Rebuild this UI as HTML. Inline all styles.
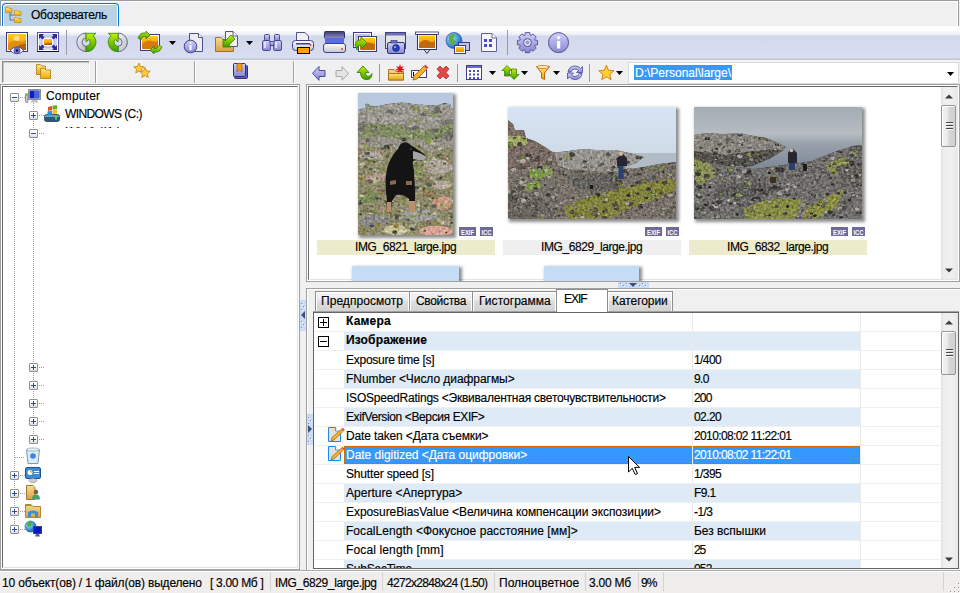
<!DOCTYPE html>
<html><head><meta charset="utf-8">
<style>
*{margin:0;padding:0;box-sizing:border-box}
html,body{width:960px;height:593px;overflow:hidden;background:#f0f0f0;font-family:"Liberation Sans",sans-serif;font-size:12px;color:#000;position:relative}
.a{position:absolute}
.t{position:absolute;white-space:nowrap;line-height:14px;font-size:12px;-webkit-text-stroke:0.15px currentColor}
svg{position:absolute;overflow:visible}
.b{font-weight:bold}
</style></head><body>
<div class="a" style="left:0px;top:0px;width:959px;height:26px;background:#f0f0f0;border-top:1px solid #9c9c9c;border-left:1px solid #9c9c9c;border-right:1px solid #9c9c9c"></div>
<div class="a" style="left:1px;top:1px;width:957px;height:1px;background:#fff;"></div>
<div class="a" style="left:1px;top:1px;width:1px;height:25px;background:#fff;"></div>
<div class="a" style="left:957px;top:1px;width:1px;height:25px;background:#fff;"></div>
<div class="a" style="left:2px;top:3px;width:117px;height:23px;border:1px solid #0a78d8;border-bottom:none;border-radius:4px 4px 0 0;background:#bad2e4;box-shadow:inset 1px 1px 0 #fff,inset -1px 0 0 #fff"></div>
<div class="t" id="m0" style="left:31px;top:8px;letter-spacing:-0.267px;">Обозреватель</div>
<div class="a" style="left:0px;top:26px;width:960px;height:34px;background:linear-gradient(#ffffff 0px,#ffffff 4px,#e9ecf6 9px,#d3d9ec 10px,#d8deef 32px,#c2c6d2 33px);"></div>
<div class="a" style="left:0px;top:60px;width:960px;height:1px;background:#f7f7f7;"></div>
<div class="a" style="left:66px;top:30px;width:1px;height:25px;background:#9a9aa8;"></div>
<div class="a" style="left:507px;top:30px;width:1px;height:25px;background:#9a9aa8;"></div>
<svg style="left:169px;top:41px" width="7" height="4" viewBox="0 0 7 4"><path d="M0,0H7L3.5,4Z" fill="#000"/></svg>
<svg style="left:246px;top:41px" width="7" height="4" viewBox="0 0 7 4"><path d="M0,0H7L3.5,4Z" fill="#000"/></svg>
<div class="a" style="left:2px;top:61px;width:88px;height:22px;background:repeating-conic-gradient(#fbfbfb 0 25%,#e6e6e6 0 50%) 0 0/2px 2px;border-top:1px solid #8a8a8a;border-left:1px solid #8a8a8a;border-right:1px solid #fff;border-bottom:1px solid #fff;box-shadow:inset 1px 1px 0 #c8c8c8"></div>
<div class="a" style="left:95px;top:61px;width:1px;height:22px;background:#a0a0a0;"></div>
<div class="a" style="left:96px;top:61px;width:1px;height:22px;background:#fff;"></div>
<div class="a" style="left:194px;top:61px;width:1px;height:22px;background:#a0a0a0;"></div>
<div class="a" style="left:195px;top:61px;width:1px;height:22px;background:#fff;"></div>
<div class="a" style="left:293px;top:61px;width:1px;height:22px;background:#a0a0a0;"></div>
<div class="a" style="left:294px;top:61px;width:1px;height:22px;background:#fff;"></div>
<div class="a" style="left:379px;top:64px;width:1px;height:18px;background:#9a9aa8;"></div>
<div class="a" style="left:457px;top:64px;width:1px;height:18px;background:#9a9aa8;"></div>
<div class="a" style="left:589px;top:64px;width:1px;height:18px;background:#9a9aa8;"></div>
<svg style="left:489px;top:71px" width="7" height="4" viewBox="0 0 7 4"><path d="M0,0H7L3.5,4Z" fill="#000"/></svg>
<svg style="left:521px;top:71px" width="7" height="4" viewBox="0 0 7 4"><path d="M0,0H7L3.5,4Z" fill="#000"/></svg>
<svg style="left:553px;top:71px" width="7" height="4" viewBox="0 0 7 4"><path d="M0,0H7L3.5,4Z" fill="#000"/></svg>
<svg style="left:616px;top:71px" width="7" height="4" viewBox="0 0 7 4"><path d="M0,0H7L3.5,4Z" fill="#000"/></svg>
<div class="a" style="left:628px;top:62px;width:331px;height:22px;background:#fff;border:1px solid #dadada"></div>
<div class="a" style="left:634px;top:65px;width:98px;height:15px;background:#3399ff;"></div>
<div class="t" id="m1" style="left:635px;top:66px;letter-spacing:-0.003px;color:#fff">D:\Personal\large\</div>
<svg style="left:947px;top:72px" width="7" height="4" viewBox="0 0 7 4"><path d="M0,0H7L3.5,4Z" fill="#000"/></svg>
<div class="a" style="left:0px;top:84px;width:300px;height:486px;background:#fff;border:1px solid #a0a0a0;border-top-color:#a0a0a0"></div>
<div class="a" style="left:2px;top:86px;width:296px;height:482px;background:#fff;border-top:1px solid #696969;border-left:1px solid #696969;border-right:1px solid #e3e3e3;border-bottom:1px solid #e3e3e3"></div>
<div class="t" id="m2" style="left:46px;top:89px;letter-spacing:0.188px;">Computer</div>
<div class="t" id="m3" style="left:65px;top:107px;letter-spacing:-0.599px;">WINDOWS (C:)</div>
<div class="a" style="left:306px;top:84px;width:654px;height:198px;background:#fff;border:1px solid #a0a0a0"></div>
<div class="a" style="left:308px;top:86px;width:650px;height:194px;background:#fff;border-top:1px solid #696969;border-left:1px solid #696969;border-right:1px solid #e3e3e3;border-bottom:1px solid #e3e3e3"></div>
<div class="a" style="left:306px;top:288px;width:654px;height:282px;background:#f0f0f0;border-top:1px solid #a0a0a0;border-left:1px solid #a0a0a0"></div>
<div class="a" style="left:313px;top:312px;width:646px;height:257px;background:#fff;border:1px solid #646464"></div>
<div class="a" style="left:306px;top:569px;width:654px;height:1px;background:#fafafa;"></div>
<div class="a" style="left:0px;top:570px;width:960px;height:1px;background:#a8a8a8;"></div>
<div class="a" style="left:0px;top:571px;width:960px;height:22px;background:#f0eded;border-top:1px solid #fff"></div>
<div class="t" id="m4" style="left:2px;top:576px;letter-spacing:-0.171px;">10 объект(ов) / 1 файл(ов) выделено</div>
<div class="t" id="m5" style="left:210px;top:576px;letter-spacing:-0.316px;">[ 3.00 Мб ]</div>
<div class="t" id="m6" style="left:275px;top:576px;letter-spacing:-0.397px;">IMG_6829_large.jpg</div>
<div class="t" id="m7" style="left:387px;top:576px;letter-spacing:-0.690px;">4272x2848x24 (1.50)</div>
<div class="t" id="m8" style="left:499px;top:576px;letter-spacing:-0.000px;">Полноцветное</div>
<div class="t" id="m9" style="left:589px;top:576px;letter-spacing:-0.227px;">3.00 Мб</div>
<div class="t" id="m10" style="left:641px;top:576px;letter-spacing:-1.044px;">9%</div>
<div class="a" style="left:14px;top:103px;width:1px;height:427px;background:repeating-linear-gradient(#a0a0a0 0 1px,transparent 1px 2px);"></div>
<div class="a" style="left:33px;top:103px;width:1px;height:337px;background:repeating-linear-gradient(#a0a0a0 0 1px,transparent 1px 2px);"></div>
<div class="a" style="left:10px;top:93px;width:9px;height:9px;border:1px solid #919191;border-radius:1px;background:linear-gradient(#fff,#fff 40%,#dcdcdc)"></div>
<div class="a" style="left:12px;top:97px;width:5px;height:1px;background:#2a4a98;"></div>
<div class="a" style="left:20px;top:97px;width:5px;height:1px;background:repeating-linear-gradient(90deg,#a0a0a0 0 1px,transparent 1px 2px);"></div>
<div class="a" style="left:29px;top:111px;width:9px;height:9px;border:1px solid #919191;border-radius:1px;background:linear-gradient(#fff,#fff 40%,#dcdcdc)"></div>
<div class="a" style="left:31px;top:115px;width:5px;height:1px;background:#2a4a98;"></div>
<div class="a" style="left:33px;top:113px;width:1px;height:5px;background:#2a4a98;"></div>
<div class="a" style="left:39px;top:115px;width:5px;height:1px;background:repeating-linear-gradient(90deg,#a0a0a0 0 1px,transparent 1px 2px);"></div>
<div class="a" style="left:29px;top:129px;width:9px;height:9px;border:1px solid #919191;border-radius:1px;background:linear-gradient(#fff,#fff 40%,#dcdcdc)"></div>
<div class="a" style="left:31px;top:133px;width:5px;height:1px;background:#2a4a98;"></div>
<div class="a" style="left:39px;top:133px;width:5px;height:1px;background:repeating-linear-gradient(90deg,#a0a0a0 0 1px,transparent 1px 2px);"></div>
<div class="a" style="left:29px;top:363px;width:9px;height:9px;border:1px solid #919191;border-radius:1px;background:linear-gradient(#fff,#fff 40%,#dcdcdc)"></div>
<div class="a" style="left:31px;top:367px;width:5px;height:1px;background:#2a4a98;"></div>
<div class="a" style="left:33px;top:365px;width:1px;height:5px;background:#2a4a98;"></div>
<div class="a" style="left:39px;top:367px;width:5px;height:1px;background:repeating-linear-gradient(90deg,#a0a0a0 0 1px,transparent 1px 2px);"></div>
<div class="a" style="left:29px;top:381px;width:9px;height:9px;border:1px solid #919191;border-radius:1px;background:linear-gradient(#fff,#fff 40%,#dcdcdc)"></div>
<div class="a" style="left:31px;top:385px;width:5px;height:1px;background:#2a4a98;"></div>
<div class="a" style="left:33px;top:383px;width:1px;height:5px;background:#2a4a98;"></div>
<div class="a" style="left:39px;top:385px;width:5px;height:1px;background:repeating-linear-gradient(90deg,#a0a0a0 0 1px,transparent 1px 2px);"></div>
<div class="a" style="left:29px;top:399px;width:9px;height:9px;border:1px solid #919191;border-radius:1px;background:linear-gradient(#fff,#fff 40%,#dcdcdc)"></div>
<div class="a" style="left:31px;top:403px;width:5px;height:1px;background:#2a4a98;"></div>
<div class="a" style="left:33px;top:401px;width:1px;height:5px;background:#2a4a98;"></div>
<div class="a" style="left:39px;top:403px;width:5px;height:1px;background:repeating-linear-gradient(90deg,#a0a0a0 0 1px,transparent 1px 2px);"></div>
<div class="a" style="left:29px;top:417px;width:9px;height:9px;border:1px solid #919191;border-radius:1px;background:linear-gradient(#fff,#fff 40%,#dcdcdc)"></div>
<div class="a" style="left:31px;top:421px;width:5px;height:1px;background:#2a4a98;"></div>
<div class="a" style="left:33px;top:419px;width:1px;height:5px;background:#2a4a98;"></div>
<div class="a" style="left:39px;top:421px;width:5px;height:1px;background:repeating-linear-gradient(90deg,#a0a0a0 0 1px,transparent 1px 2px);"></div>
<div class="a" style="left:29px;top:435px;width:9px;height:9px;border:1px solid #919191;border-radius:1px;background:linear-gradient(#fff,#fff 40%,#dcdcdc)"></div>
<div class="a" style="left:31px;top:439px;width:5px;height:1px;background:#2a4a98;"></div>
<div class="a" style="left:33px;top:437px;width:1px;height:5px;background:#2a4a98;"></div>
<div class="a" style="left:39px;top:439px;width:5px;height:1px;background:repeating-linear-gradient(90deg,#a0a0a0 0 1px,transparent 1px 2px);"></div>
<div class="a" style="left:15px;top:457px;width:10px;height:1px;background:repeating-linear-gradient(90deg,#a0a0a0 0 1px,transparent 1px 2px);"></div>
<div class="a" style="left:10px;top:471px;width:9px;height:9px;border:1px solid #919191;border-radius:1px;background:linear-gradient(#fff,#fff 40%,#dcdcdc)"></div>
<div class="a" style="left:12px;top:475px;width:5px;height:1px;background:#2a4a98;"></div>
<div class="a" style="left:14px;top:473px;width:1px;height:5px;background:#2a4a98;"></div>
<div class="a" style="left:20px;top:475px;width:5px;height:1px;background:repeating-linear-gradient(90deg,#a0a0a0 0 1px,transparent 1px 2px);"></div>
<div class="a" style="left:10px;top:489px;width:9px;height:9px;border:1px solid #919191;border-radius:1px;background:linear-gradient(#fff,#fff 40%,#dcdcdc)"></div>
<div class="a" style="left:12px;top:493px;width:5px;height:1px;background:#2a4a98;"></div>
<div class="a" style="left:14px;top:491px;width:1px;height:5px;background:#2a4a98;"></div>
<div class="a" style="left:20px;top:493px;width:5px;height:1px;background:repeating-linear-gradient(90deg,#a0a0a0 0 1px,transparent 1px 2px);"></div>
<div class="a" style="left:10px;top:507px;width:9px;height:9px;border:1px solid #919191;border-radius:1px;background:linear-gradient(#fff,#fff 40%,#dcdcdc)"></div>
<div class="a" style="left:12px;top:511px;width:5px;height:1px;background:#2a4a98;"></div>
<div class="a" style="left:14px;top:509px;width:1px;height:5px;background:#2a4a98;"></div>
<div class="a" style="left:20px;top:511px;width:5px;height:1px;background:repeating-linear-gradient(90deg,#a0a0a0 0 1px,transparent 1px 2px);"></div>
<div class="a" style="left:10px;top:525px;width:9px;height:9px;border:1px solid #919191;border-radius:1px;background:linear-gradient(#fff,#fff 40%,#dcdcdc)"></div>
<div class="a" style="left:12px;top:529px;width:5px;height:1px;background:#2a4a98;"></div>
<div class="a" style="left:14px;top:527px;width:1px;height:5px;background:#2a4a98;"></div>
<div class="a" style="left:20px;top:529px;width:5px;height:1px;background:repeating-linear-gradient(90deg,#a0a0a0 0 1px,transparent 1px 2px);"></div>
<div class="a" style="left:65px;top:127px;width:80px;height:1px;overflow:hidden"><div class="t" style="left:0;top:-3px;letter-spacing:0.3px">DATA (D:)</div></div>
<div class="a" style="left:314px;top:313px;width:627px;height:255px;overflow:hidden">
<div class="a" style="left:0px;top:18px;width:627px;height:1px;background:#f0f0f0;"></div>
<div class="a" style="left:4px;top:4px;width:11px;height:11px;background:#fff;border:1px solid #000"></div>
<div class="a" style="left:6px;top:9px;width:7px;height:1px;background:#000;"></div>
<div class="a" style="left:9px;top:6px;width:1px;height:7px;background:#000;"></div>
<div class="t b" id="m11" style="left:32px;top:1px;letter-spacing:0.179px;">Камера</div>
<div class="a" style="left:30px;top:19px;width:516px;height:18px;background:#deebf6;"></div>
<div class="a" style="left:0px;top:37px;width:627px;height:1px;background:#f0f0f0;"></div>
<div class="a" style="left:4px;top:23px;width:11px;height:11px;background:#fff;border:1px solid #000"></div>
<div class="a" style="left:6px;top:28px;width:7px;height:1px;background:#000;"></div>
<div class="t b" id="m12" style="left:32px;top:20px;letter-spacing:0.164px;">Изображение</div>
<div class="a" style="left:0px;top:56px;width:627px;height:1px;background:#f0f0f0;"></div>
<div class="t" id="m13" style="left:32px;top:40px;letter-spacing:-0.256px;">Exposure time [s]</div>
<div class="t" id="m14" style="left:380px;top:40px;letter-spacing:-0.601px;">1/400</div>
<div class="a" style="left:30px;top:57px;width:516px;height:18px;background:#deebf6;"></div>
<div class="a" style="left:0px;top:75px;width:627px;height:1px;background:#f0f0f0;"></div>
<div class="t" id="m15" style="left:32px;top:59px;letter-spacing:-0.057px;">FNumber &lt;Число диафрагмы&gt;</div>
<div class="t" id="m16" style="left:380px;top:59px;letter-spacing:-0.667px;">9.0</div>
<div class="a" style="left:0px;top:94px;width:627px;height:1px;background:#f0f0f0;"></div>
<div class="t" id="m17" style="left:32px;top:78px;letter-spacing:-0.230px;">ISOSpeedRatings &lt;Эквивалентная светочувствительности&gt;</div>
<div class="t" id="m18" style="left:380px;top:78px;letter-spacing:-0.801px;">200</div>
<div class="a" style="left:30px;top:95px;width:516px;height:18px;background:#deebf6;"></div>
<div class="a" style="left:0px;top:113px;width:627px;height:1px;background:#f0f0f0;"></div>
<div class="t" id="m19" style="left:32px;top:97px;letter-spacing:-0.381px;">ExifVersion &lt;Версия EXIF&gt;</div>
<div class="t" id="m20" style="left:380px;top:97px;letter-spacing:-0.601px;">02.20</div>
<div class="a" style="left:0px;top:132px;width:627px;height:1px;background:#f0f0f0;"></div>
<div class="t" id="m21" style="left:32px;top:116px;letter-spacing:-0.138px;">Date taken &lt;Дата съемки&gt;</div>
<div class="t" id="m22" style="left:380px;top:116px;letter-spacing:-0.623px;">2010:08:02 11:22:01</div>
<div class="a" style="left:30px;top:133px;width:516px;height:18px;background:#3399ff;"></div>
<div class="a" style="left:30px;top:133px;width:516px;height:1px;background:repeating-linear-gradient(90deg,#cc6600 0 1px,transparent 1px 2px);"></div>
<div class="a" style="left:30px;top:150px;width:516px;height:1px;background:repeating-linear-gradient(90deg,#cc6600 0 1px,transparent 1px 2px);"></div>
<div class="a" style="left:30px;top:133px;width:1px;height:18px;background:repeating-linear-gradient(#cc6600 0 1px,transparent 1px 2px);"></div>
<div class="a" style="left:545px;top:133px;width:1px;height:18px;background:repeating-linear-gradient(#cc6600 0 1px,transparent 1px 2px);"></div>
<div class="a" style="left:0px;top:151px;width:627px;height:1px;background:#f0f0f0;"></div>
<div class="t" id="m23" style="left:32px;top:135px;letter-spacing:-0.019px;color:#fff;">Date digitized &lt;Дата оцифровки&gt;</div>
<div class="t" id="m24" style="left:380px;top:135px;letter-spacing:-0.623px;color:#fff;">2010:08:02 11:22:01</div>
<div class="a" style="left:0px;top:170px;width:627px;height:1px;background:#f0f0f0;"></div>
<div class="t" id="m25" style="left:32px;top:154px;letter-spacing:-0.171px;">Shutter speed [s]</div>
<div class="t" id="m26" style="left:380px;top:154px;letter-spacing:-0.601px;">1/395</div>
<div class="a" style="left:30px;top:171px;width:516px;height:18px;background:#deebf6;"></div>
<div class="a" style="left:0px;top:189px;width:627px;height:1px;background:#f0f0f0;"></div>
<div class="t" id="m27" style="left:32px;top:173px;letter-spacing:0.027px;">Aperture &lt;Апертура&gt;</div>
<div class="t" id="m28" style="left:380px;top:173px;letter-spacing:-0.640px;">F9.1</div>
<div class="a" style="left:0px;top:208px;width:627px;height:1px;background:#f0f0f0;"></div>
<div class="t" id="m29" style="left:32px;top:192px;letter-spacing:-0.064px;">ExposureBiasValue &lt;Величина компенсации экспозиции&gt;</div>
<div class="t" id="m30" style="left:380px;top:192px;letter-spacing:-0.552px;">-1/3</div>
<div class="a" style="left:30px;top:209px;width:516px;height:18px;background:#deebf6;"></div>
<div class="a" style="left:0px;top:227px;width:627px;height:1px;background:#f0f0f0;"></div>
<div class="t" id="m31" style="left:32px;top:211px;letter-spacing:0.042px;">FocalLength &lt;Фокусное расстояние [мм]&gt;</div>
<div class="t" id="m32" style="left:380px;top:211px;letter-spacing:-0.008px;">Без вспышки</div>
<div class="a" style="left:0px;top:246px;width:627px;height:1px;background:#f0f0f0;"></div>
<div class="t" id="m33" style="left:32px;top:230px;letter-spacing:0.133px;">Focal length [mm]</div>
<div class="t" id="m34" style="left:380px;top:230px;letter-spacing:-1.069px;">25</div>
<div class="a" style="left:30px;top:247px;width:516px;height:18px;background:#deebf6;"></div>
<div class="a" style="left:0px;top:265px;width:627px;height:1px;background:#f0f0f0;"></div>
<div class="t" id="m35" style="left:32px;top:249px;letter-spacing:-0.227px;">SubSecTime</div>
<div class="t" id="m36" style="left:380px;top:249px;letter-spacing:-0.801px;">052</div>
<div class="a" style="left:546px;top:0px;width:1px;height:255px;background:#eaeaea;"></div>
<div class="a" style="left:378px;top:0px;width:1px;height:255px;background:#eaeaea;"></div>
</div>
<div class="a" style="left:306px;top:288px;width:654px;height:1px;background:#a0a0a0;"></div>
<div class="a" style="left:307px;top:289px;width:653px;height:1px;background:#fff;"></div>
<div class="a" style="left:306px;top:288px;width:1px;height:282px;background:#a0a0a0;"></div>
<div class="a" style="left:307px;top:289px;width:1px;height:280px;background:#fff;"></div>
<div class="a" style="left:313px;top:311px;width:646px;height:1px;background:#a0a0a0;"></div>
<div class="a" style="left:315px;top:291px;width:95px;height:20px;border:1px solid #8e8e8e;border-bottom:none;background:linear-gradient(#f3f3f3 0,#ececec 8px,#dedede 9px,#d2d2d2 19px);box-shadow:inset 1px 1px 0 #fff,inset -1px 0 0 #fff"></div>
<div class="t" id="m37" style="left:321px;top:294px;letter-spacing:0.055px;">Предпросмотр</div>
<div class="a" style="left:409px;top:291px;width:64px;height:20px;border:1px solid #8e8e8e;border-bottom:none;background:linear-gradient(#f3f3f3 0,#ececec 8px,#dedede 9px,#d2d2d2 19px);box-shadow:inset 1px 1px 0 #fff,inset -1px 0 0 #fff"></div>
<div class="t" id="m38" style="left:416px;top:294px;letter-spacing:-0.329px;">Свойства</div>
<div class="a" style="left:472px;top:291px;width:85px;height:20px;border:1px solid #8e8e8e;border-bottom:none;background:linear-gradient(#f3f3f3 0,#ececec 8px,#dedede 9px,#d2d2d2 19px);box-shadow:inset 1px 1px 0 #fff,inset -1px 0 0 #fff"></div>
<div class="t" id="m39" style="left:479px;top:294px;letter-spacing:0.033px;">Гистограмма</div>
<div class="a" style="left:607px;top:291px;width:66px;height:20px;border:1px solid #8e8e8e;border-bottom:none;background:linear-gradient(#f3f3f3 0,#ececec 8px,#dedede 9px,#d2d2d2 19px);box-shadow:inset 1px 1px 0 #fff,inset -1px 0 0 #fff"></div>
<div class="t" id="m40" style="left:612px;top:294px;letter-spacing:-0.064px;">Категории</div>
<div class="a" style="left:556px;top:289px;width:52px;height:23px;border:1px solid #8e8e8e;border-bottom:none;background:#fff"></div>
<div class="t" id="m41" style="left:564px;top:292px;letter-spacing:-1.057px;">EXIF</div>
<div class="a" style="left:309px;top:87px;width:632px;height:194px;overflow:hidden">
<div class="a" style="left:49px;top:6px;width:95px;height:142px;box-shadow:2px 2px 3px 1px rgba(0,0,0,0.45)"></div>
<svg style="left:49px;top:6px;overflow:hidden" width="95" height="142" viewBox="0 0 95 142">
<defs><linearGradient id="dsky" x1="0" y1="0" x2="0" y2="1"><stop offset="0" stop-color="#b8c8e0"/><stop offset="1" stop-color="#c8ccd0"/></linearGradient><filter id="tx1" x="0" y="0" width="100%" height="100%" color-interpolation-filters="sRGB"><feTurbulence type="fractalNoise" baseFrequency="0.4" numOctaves="3" seed="3" result="n"/><feColorMatrix in="n" type="matrix" values="0.33 0.33 0.33 0 0  0.33 0.33 0.33 0 0  0.33 0.33 0.33 0 0  0 0 0 0 1" result="g"/><feComposite in="SourceGraphic" in2="g" operator="arithmetic" k1="0" k2="1" k3="0.75" k4="-0.375" result="c"/><feComposite in="c" in2="SourceAlpha" operator="in"/></filter></defs>
<rect width="95" height="142" fill="url(#dsky)"/>
<g filter="url(#tx1)">
<path d="M0,17 Q10,13 20,13 L30,11 Q45,8 55,11 Q70,13 80,12 L95,15 V142 H0Z" fill="#98968e"/>
<path d="M0,32 Q25,28 50,34 T95,30 V142 H0Z" fill="#7e8a62"/>
<path d="M0,46 H95 V142 H0Z" fill="#8c8a6a"/>
<path d="M0,44 Q20,42 40,46 T95,44 V54 H0Z" fill="#96948a"/>
<ellipse cx="12" cy="62" rx="12" ry="4" fill="#a8a49c"/>
<ellipse cx="80" cy="74" rx="15" ry="7" fill="#aea49e"/>
<ellipse cx="76" cy="55" rx="11" ry="4" fill="#a09c94"/>
<ellipse cx="18" cy="84" rx="10" ry="4" fill="#b09a90"/>
<ellipse cx="85" cy="110" rx="11" ry="7" fill="#c89a86"/>
<ellipse cx="62" cy="122" rx="18" ry="6" fill="#9c9c9a"/>
<ellipse cx="16" cy="128" rx="15" ry="6" fill="#8a8886"/>
<ellipse cx="78" cy="138" rx="17" ry="5" fill="#d8a498"/>
<ellipse cx="38" cy="137" rx="12" ry="5" fill="#c8c49c"/>
<ellipse cx="84" cy="92" rx="10" ry="4" fill="#b8a8a0"/>
<ellipse cx="10" cy="104" rx="10" ry="6" fill="#7c8a58"/>
<ellipse cx="70" cy="100" rx="8" ry="4" fill="#8a7a58"/>
<ellipse cx="43.0" cy="98.9" rx="2.8" ry="1.8" fill="#94844a"/><ellipse cx="81.2" cy="62.6" rx="2.6" ry="1.7" fill="#4a4a40"/><ellipse cx="75.3" cy="53.2" rx="1.6" ry="0.7" fill="#6e7a48"/><ellipse cx="56.6" cy="82.8" rx="1.9" ry="1.5" fill="#a8a890"/><ellipse cx="59.2" cy="125.5" rx="1.1" ry="0.5" fill="#c0bca0"/><ellipse cx="57.0" cy="120.3" rx="1.7" ry="1.1" fill="#c0bca0"/><ellipse cx="49.3" cy="106.7" rx="2.0" ry="1.5" fill="#a8aa98"/><ellipse cx="62.2" cy="83.9" rx="2.1" ry="1.8" fill="#8a9a50"/><ellipse cx="67.2" cy="74.9" rx="1.5" ry="0.8" fill="#8a9a50"/><ellipse cx="53.5" cy="54.6" rx="1.2" ry="0.7" fill="#8a9a50"/><ellipse cx="91.0" cy="127.0" rx="1.0" ry="0.5" fill="#6e7a48"/><ellipse cx="44.6" cy="140.1" rx="1.8" ry="0.8" fill="#c0bca0"/><ellipse cx="74.0" cy="70.4" rx="1.2" ry="0.7" fill="#5a5a50"/><ellipse cx="72.0" cy="55.6" rx="1.5" ry="0.7" fill="#6e7a48"/><ellipse cx="44.2" cy="91.7" rx="2.4" ry="1.2" fill="#94844a"/><ellipse cx="18.1" cy="115.7" rx="1.3" ry="0.9" fill="#8a9a50"/><ellipse cx="37.5" cy="141.0" rx="1.0" ry="0.8" fill="#4a4a40"/><ellipse cx="28.9" cy="130.7" rx="1.4" ry="0.8" fill="#4a4a40"/><ellipse cx="61.0" cy="53.8" rx="3.0" ry="1.5" fill="#7a6a5a"/><ellipse cx="0.9" cy="103.8" rx="2.7" ry="1.6" fill="#8a9a50"/><ellipse cx="8.6" cy="101.1" rx="1.5" ry="1.0" fill="#a88a80"/><ellipse cx="59.1" cy="56.5" rx="2.2" ry="1.8" fill="#a8a890"/><ellipse cx="82.3" cy="61.9" rx="1.3" ry="1.1" fill="#4a4a40"/><ellipse cx="23.7" cy="62.6" rx="2.5" ry="2.2" fill="#c0bca0"/><ellipse cx="65.3" cy="82.0" rx="2.0" ry="0.9" fill="#6e7a48"/><ellipse cx="9.9" cy="47.8" rx="2.9" ry="1.5" fill="#5a5a50"/><ellipse cx="24.4" cy="124.7" rx="2.2" ry="1.2" fill="#a8a890"/><ellipse cx="88.3" cy="139.8" rx="1.3" ry="0.8" fill="#4a4a40"/><ellipse cx="58.4" cy="71.5" rx="2.8" ry="1.4" fill="#6e7a48"/><ellipse cx="6.6" cy="84.3" rx="1.5" ry="0.6" fill="#7a6a5a"/><ellipse cx="35.0" cy="100.1" rx="1.3" ry="0.7" fill="#a8aa98"/><ellipse cx="93.1" cy="108.4" rx="2.4" ry="1.6" fill="#a8a890"/><ellipse cx="56.0" cy="134.5" rx="1.9" ry="1.1" fill="#7a6a5a"/><ellipse cx="91.5" cy="46.1" rx="2.3" ry="1.5" fill="#7a6a5a"/><ellipse cx="30.3" cy="141.9" rx="1.2" ry="0.8" fill="#6e7a48"/><ellipse cx="85.5" cy="116.2" rx="2.4" ry="1.9" fill="#a88a80"/><ellipse cx="33.4" cy="111.1" rx="2.8" ry="2.3" fill="#5a5a50"/><ellipse cx="89.7" cy="47.0" rx="2.0" ry="0.8" fill="#5a5a50"/><ellipse cx="36.0" cy="45.2" rx="1.1" ry="0.5" fill="#8a9a50"/><ellipse cx="94.4" cy="130.2" rx="2.5" ry="1.5" fill="#4a4a40"/><ellipse cx="43.5" cy="89.3" rx="2.1" ry="1.4" fill="#94844a"/><ellipse cx="2.8" cy="102.9" rx="2.0" ry="1.0" fill="#8a9a50"/><ellipse cx="47.2" cy="104.2" rx="2.8" ry="1.5" fill="#6e7a48"/><ellipse cx="35.0" cy="58.0" rx="2.2" ry="1.5" fill="#a88a80"/><ellipse cx="62.7" cy="87.3" rx="2.8" ry="1.6" fill="#7a6a5a"/><ellipse cx="18.9" cy="86.2" rx="2.6" ry="2.2" fill="#c0bca0"/><ellipse cx="36.5" cy="101.1" rx="1.6" ry="0.8" fill="#a8aa98"/><ellipse cx="33.3" cy="131.8" rx="1.1" ry="0.5" fill="#7a6a5a"/><ellipse cx="78.1" cy="55.1" rx="1.9" ry="1.7" fill="#5a5a50"/><ellipse cx="36.3" cy="95.0" rx="2.3" ry="1.8" fill="#4a4a40"/><ellipse cx="43.0" cy="51.3" rx="1.1" ry="0.9" fill="#6e7a48"/><ellipse cx="64.4" cy="71.5" rx="1.7" ry="1.2" fill="#4a4a40"/><ellipse cx="1.8" cy="57.3" rx="1.9" ry="0.8" fill="#7a6a5a"/><ellipse cx="22.6" cy="57.8" rx="1.1" ry="0.8" fill="#a8aa98"/><ellipse cx="10.4" cy="96.5" rx="2.3" ry="1.3" fill="#8a9a50"/><ellipse cx="65.0" cy="63.5" rx="2.0" ry="1.0" fill="#6e7a48"/><ellipse cx="71.7" cy="96.4" rx="1.1" ry="0.6" fill="#a88a80"/><ellipse cx="51.3" cy="136.8" rx="2.0" ry="1.8" fill="#a8a890"/><ellipse cx="37.4" cy="121.6" rx="2.8" ry="1.2" fill="#5a5a50"/><ellipse cx="12.3" cy="88.4" rx="2.3" ry="1.9" fill="#5a5a50"/><ellipse cx="52.3" cy="108.0" rx="2.0" ry="1.6" fill="#a88a80"/><ellipse cx="44.1" cy="107.8" rx="1.4" ry="1.1" fill="#8a9a50"/><ellipse cx="20.3" cy="132.2" rx="3.0" ry="2.6" fill="#94844a"/><ellipse cx="92.8" cy="135.4" rx="1.5" ry="1.2" fill="#6e7a48"/><ellipse cx="33.1" cy="52.1" rx="1.9" ry="1.3" fill="#7a6a5a"/><ellipse cx="46.3" cy="46.8" rx="2.6" ry="1.1" fill="#6e7a48"/><ellipse cx="16.4" cy="76.8" rx="2.6" ry="1.2" fill="#a8a890"/><ellipse cx="95.0" cy="132.3" rx="2.0" ry="1.5" fill="#a8aa98"/><ellipse cx="89.8" cy="92.3" rx="2.9" ry="1.3" fill="#c0bca0"/><ellipse cx="41.7" cy="98.8" rx="2.7" ry="1.8" fill="#a8a890"/><ellipse cx="49.7" cy="126.7" rx="2.1" ry="1.2" fill="#5a5a50"/><ellipse cx="90.7" cy="129.3" rx="2.2" ry="1.2" fill="#a8a890"/><ellipse cx="92.0" cy="95.4" rx="2.1" ry="1.1" fill="#94844a"/><ellipse cx="10.9" cy="44.5" rx="1.8" ry="1.2" fill="#6e7a48"/><ellipse cx="49.0" cy="83.3" rx="2.6" ry="1.8" fill="#a8aa98"/><ellipse cx="8.9" cy="60.3" rx="2.9" ry="1.8" fill="#5a5a50"/><ellipse cx="25.6" cy="90.4" rx="1.3" ry="0.8" fill="#a8aa98"/><ellipse cx="49.9" cy="54.6" rx="1.8" ry="0.8" fill="#7a6a5a"/><ellipse cx="12.3" cy="120.4" rx="1.0" ry="0.5" fill="#c0bca0"/><ellipse cx="1.1" cy="71.8" rx="2.4" ry="1.3" fill="#a8aa98"/><ellipse cx="10.0" cy="115.6" rx="1.2" ry="0.8" fill="#7a6a5a"/><ellipse cx="68.2" cy="112.7" rx="2.8" ry="1.1" fill="#5a5a50"/><ellipse cx="78.4" cy="104.3" rx="2.1" ry="1.7" fill="#94844a"/><ellipse cx="60.7" cy="95.9" rx="2.7" ry="1.9" fill="#a8a890"/><ellipse cx="22.1" cy="116.6" rx="2.6" ry="2.2" fill="#a88a80"/><ellipse cx="57.3" cy="131.3" rx="1.4" ry="1.1" fill="#c0bca0"/><ellipse cx="84.3" cy="57.1" rx="1.5" ry="1.1" fill="#7a6a5a"/><ellipse cx="36.9" cy="86.6" rx="2.9" ry="1.9" fill="#a8a890"/><ellipse cx="19.1" cy="105.5" rx="2.6" ry="1.2" fill="#4a4a40"/><ellipse cx="64.8" cy="133.3" rx="2.9" ry="1.3" fill="#94844a"/><ellipse cx="60.3" cy="77.7" rx="3.0" ry="2.4" fill="#8a9a50"/><ellipse cx="45.8" cy="46.4" rx="2.5" ry="1.8" fill="#4a4a40"/><ellipse cx="45.7" cy="62.6" rx="1.2" ry="0.6" fill="#a8a890"/><ellipse cx="94.1" cy="134.8" rx="1.2" ry="0.5" fill="#a8aa98"/><ellipse cx="7.4" cy="53.5" rx="1.8" ry="1.1" fill="#a88a80"/><ellipse cx="40.9" cy="102.9" rx="1.0" ry="0.8" fill="#c0bca0"/><ellipse cx="17.2" cy="88.5" rx="2.5" ry="1.5" fill="#c0bca0"/><ellipse cx="57.5" cy="53.3" rx="2.6" ry="1.5" fill="#8a9a50"/><ellipse cx="76.2" cy="113.1" rx="2.7" ry="1.9" fill="#5a5a50"/><ellipse cx="54.1" cy="62.7" rx="2.2" ry="1.2" fill="#7a6a5a"/><ellipse cx="26.6" cy="55.4" rx="2.5" ry="1.2" fill="#5a5a50"/><ellipse cx="12.7" cy="76.3" rx="2.1" ry="1.2" fill="#5a5a50"/><ellipse cx="72.7" cy="83.8" rx="2.4" ry="1.1" fill="#a88a80"/><ellipse cx="28.7" cy="53.9" rx="2.8" ry="2.5" fill="#4a4a40"/><ellipse cx="4.7" cy="70.8" rx="2.9" ry="1.6" fill="#c0bca0"/><ellipse cx="62.7" cy="99.8" rx="2.1" ry="1.2" fill="#a8aa98"/><ellipse cx="61.0" cy="112.7" rx="2.5" ry="2.2" fill="#6e7a48"/><ellipse cx="10.9" cy="54.6" rx="1.5" ry="0.9" fill="#94844a"/><ellipse cx="4.8" cy="63.2" rx="1.8" ry="0.8" fill="#7a6a5a"/><ellipse cx="26.2" cy="77.4" rx="2.1" ry="1.3" fill="#94844a"/><ellipse cx="54.0" cy="141.5" rx="2.3" ry="1.8" fill="#8a9a50"/><ellipse cx="52.2" cy="109.5" rx="2.9" ry="1.7" fill="#a8a890"/><ellipse cx="36.7" cy="139.1" rx="2.7" ry="1.8" fill="#4a4a40"/><ellipse cx="5.6" cy="136.6" rx="1.8" ry="1.2" fill="#4a4a40"/><ellipse cx="29.7" cy="96.0" rx="2.0" ry="1.1" fill="#7a6a5a"/><ellipse cx="63.0" cy="117.3" rx="1.1" ry="0.8" fill="#4a4a40"/><ellipse cx="4.1" cy="59.3" rx="2.5" ry="1.5" fill="#a88a80"/><ellipse cx="71.1" cy="48.9" rx="3.0" ry="2.6" fill="#8a9a50"/><ellipse cx="75.8" cy="65.9" rx="2.4" ry="1.3" fill="#c0bca0"/><ellipse cx="4.3" cy="53.7" rx="2.6" ry="2.2" fill="#a8a890"/><ellipse cx="93.0" cy="124.0" rx="2.2" ry="1.0" fill="#4a4a40"/><ellipse cx="39.6" cy="55.6" rx="2.7" ry="1.6" fill="#a8a890"/><ellipse cx="11.8" cy="87.4" rx="2.3" ry="1.5" fill="#7a6a5a"/><ellipse cx="60.8" cy="110.8" rx="1.7" ry="1.3" fill="#a8a890"/><ellipse cx="90.5" cy="116.0" rx="1.5" ry="0.7" fill="#7a6a5a"/><ellipse cx="74.5" cy="105.2" rx="1.7" ry="0.9" fill="#4a4a40"/><ellipse cx="66.4" cy="62.6" rx="1.6" ry="0.8" fill="#c0bca0"/><ellipse cx="47.7" cy="108.0" rx="1.4" ry="1.0" fill="#6e7a48"/><ellipse cx="0.9" cy="69.4" rx="1.1" ry="0.4" fill="#c0bca0"/><ellipse cx="51.5" cy="51.1" rx="1.2" ry="0.9" fill="#94844a"/><ellipse cx="22.3" cy="140.2" rx="2.0" ry="1.1" fill="#a88a80"/><ellipse cx="32.7" cy="117.0" rx="2.7" ry="1.2" fill="#8a9a50"/><ellipse cx="42.5" cy="124.6" rx="2.7" ry="2.1" fill="#a8aa98"/><ellipse cx="40.3" cy="69.3" rx="2.6" ry="1.5" fill="#4a4a40"/><ellipse cx="30.9" cy="97.8" rx="2.5" ry="2.1" fill="#5a5a50"/><ellipse cx="62.1" cy="100.9" rx="1.9" ry="1.1" fill="#94844a"/><ellipse cx="7.9" cy="99.3" rx="2.0" ry="1.5" fill="#7a6a5a"/><ellipse cx="78.2" cy="44.9" rx="1.6" ry="1.4" fill="#4a4a40"/><ellipse cx="7.8" cy="73.8" rx="2.4" ry="1.8" fill="#7a6a5a"/><ellipse cx="83.8" cy="65.4" rx="2.3" ry="1.3" fill="#8a9a50"/><ellipse cx="30.6" cy="87.2" rx="2.2" ry="1.9" fill="#7a6a5a"/><ellipse cx="41.6" cy="122.7" rx="1.6" ry="0.9" fill="#5a5a50"/><ellipse cx="91.9" cy="115.5" rx="2.0" ry="0.9" fill="#a88a80"/><ellipse cx="2.3" cy="110.3" rx="2.2" ry="1.7" fill="#4a4a40"/><ellipse cx="35.0" cy="82.2" rx="1.3" ry="0.9" fill="#a8a890"/><ellipse cx="16.8" cy="118.4" rx="2.8" ry="1.5" fill="#6e7a48"/><ellipse cx="21.0" cy="49.7" rx="1.3" ry="0.7" fill="#6e7a48"/><ellipse cx="61.9" cy="122.8" rx="1.1" ry="0.8" fill="#94844a"/><ellipse cx="8.0" cy="52.0" rx="2.5" ry="2.1" fill="#8a9a50"/><ellipse cx="2.5" cy="108.0" rx="1.2" ry="1.0" fill="#5a5a50"/><ellipse cx="23.3" cy="65.6" rx="2.5" ry="1.7" fill="#a8aa98"/><ellipse cx="37.5" cy="77.1" rx="2.9" ry="2.2" fill="#a8aa98"/><ellipse cx="46.4" cy="122.9" rx="1.1" ry="0.8" fill="#6e7a48"/><ellipse cx="39.0" cy="125.0" rx="2.3" ry="1.9" fill="#5a5a50"/><ellipse cx="79.2" cy="131.1" rx="2.9" ry="2.1" fill="#94844a"/><ellipse cx="34.4" cy="45.0" rx="1.2" ry="1.1" fill="#a8a890"/><ellipse cx="23.3" cy="59.9" rx="2.3" ry="1.7" fill="#a88a80"/><ellipse cx="19.4" cy="85.6" rx="1.6" ry="1.4" fill="#6e7a48"/><ellipse cx="44.8" cy="115.6" rx="1.6" ry="0.8" fill="#a8a890"/><ellipse cx="86.7" cy="117.8" rx="1.0" ry="0.7" fill="#6e7a48"/><ellipse cx="29.7" cy="63.4" rx="1.7" ry="1.2" fill="#4a4a40"/><ellipse cx="68.1" cy="102.3" rx="1.4" ry="0.7" fill="#7a6a5a"/><ellipse cx="38.2" cy="133.2" rx="2.9" ry="2.1" fill="#94844a"/><ellipse cx="45.6" cy="69.5" rx="2.8" ry="2.4" fill="#a88a80"/><ellipse cx="62.7" cy="119.6" rx="1.2" ry="1.0" fill="#5a5a50"/><ellipse cx="4.7" cy="136.9" rx="2.6" ry="1.5" fill="#94844a"/><ellipse cx="75.5" cy="119.9" rx="2.6" ry="1.1" fill="#c0bca0"/><ellipse cx="84.8" cy="129.7" rx="2.8" ry="1.8" fill="#c0bca0"/><ellipse cx="67.8" cy="103.4" rx="1.3" ry="0.6" fill="#a88a80"/><ellipse cx="13.8" cy="133.0" rx="2.6" ry="1.2" fill="#4a4a40"/><ellipse cx="25.3" cy="96.4" rx="1.3" ry="1.0" fill="#6e7a48"/><ellipse cx="19.4" cy="133.8" rx="1.3" ry="0.6" fill="#a88a80"/><ellipse cx="25.6" cy="114.2" rx="1.2" ry="0.8" fill="#a8aa98"/><ellipse cx="7.9" cy="117.4" rx="2.1" ry="1.4" fill="#6e7a48"/><ellipse cx="75.0" cy="84.9" rx="2.8" ry="1.3" fill="#a8aa98"/><ellipse cx="19.8" cy="97.3" rx="2.1" ry="1.0" fill="#7a6a5a"/><ellipse cx="30.0" cy="83.7" rx="2.1" ry="1.9" fill="#8a9a50"/><ellipse cx="34.2" cy="111.3" rx="1.2" ry="0.7" fill="#a8aa98"/><ellipse cx="70.9" cy="120.9" rx="1.2" ry="0.8" fill="#5a5a50"/><ellipse cx="67.6" cy="90.6" rx="1.6" ry="0.7" fill="#6e7a48"/><ellipse cx="81.3" cy="126.8" rx="2.4" ry="2.1" fill="#a8a890"/><ellipse cx="27.6" cy="80.8" rx="2.1" ry="1.1" fill="#a88a80"/><ellipse cx="71.7" cy="98.4" rx="1.2" ry="0.6" fill="#5a5a50"/><ellipse cx="69.5" cy="76.3" rx="2.9" ry="2.0" fill="#a88a80"/><ellipse cx="42.5" cy="81.5" rx="1.2" ry="0.9" fill="#a8a890"/><ellipse cx="64.4" cy="113.4" rx="1.4" ry="0.8" fill="#a8aa98"/><ellipse cx="56.3" cy="52.8" rx="1.5" ry="0.7" fill="#8a9a50"/><ellipse cx="41.2" cy="119.6" rx="1.7" ry="1.4" fill="#94844a"/><ellipse cx="13.2" cy="64.1" rx="1.3" ry="1.0" fill="#a8aa98"/><ellipse cx="31.5" cy="84.4" rx="1.0" ry="0.6" fill="#a88a80"/><ellipse cx="93.3" cy="121.4" rx="2.3" ry="1.6" fill="#6e7a48"/><ellipse cx="24.8" cy="62.5" rx="1.6" ry="1.0" fill="#94844a"/><ellipse cx="35.9" cy="93.9" rx="2.6" ry="2.1" fill="#4a4a40"/><ellipse cx="67.8" cy="68.9" rx="2.1" ry="1.1" fill="#c0bca0"/><ellipse cx="33.5" cy="93.0" rx="1.3" ry="1.0" fill="#94844a"/><ellipse cx="94.8" cy="113.3" rx="2.9" ry="2.0" fill="#6e7a48"/><ellipse cx="59.6" cy="63.4" rx="1.2" ry="0.6" fill="#4a4a40"/><ellipse cx="39.7" cy="76.7" rx="1.2" ry="1.0" fill="#7a6a5a"/><ellipse cx="44.0" cy="56.2" rx="2.9" ry="1.4" fill="#4a4a40"/><ellipse cx="51.6" cy="99.0" rx="2.1" ry="1.1" fill="#a88a80"/><ellipse cx="57.1" cy="56.0" rx="2.6" ry="1.4" fill="#a88a80"/><ellipse cx="22.9" cy="100.2" rx="2.7" ry="1.3" fill="#94844a"/><ellipse cx="77.1" cy="88.5" rx="1.8" ry="1.4" fill="#a8a890"/><ellipse cx="29.2" cy="109.8" rx="2.5" ry="1.5" fill="#4a4a40"/><ellipse cx="60.8" cy="118.8" rx="1.3" ry="0.8" fill="#6e7a48"/><ellipse cx="13.6" cy="81.9" rx="2.1" ry="1.0" fill="#94844a"/><ellipse cx="12.5" cy="67.9" rx="2.9" ry="1.2" fill="#6e7a48"/><ellipse cx="68.6" cy="121.2" rx="1.8" ry="1.2" fill="#8a9a50"/><ellipse cx="44.6" cy="84.3" rx="2.2" ry="1.7" fill="#5a5a50"/><ellipse cx="71.4" cy="91.6" rx="3.0" ry="2.4" fill="#5a5a50"/><ellipse cx="78.4" cy="55.5" rx="1.2" ry="1.1" fill="#a88a80"/><ellipse cx="49.9" cy="86.4" rx="2.8" ry="1.6" fill="#6e7a48"/><ellipse cx="28.1" cy="104.4" rx="1.9" ry="1.1" fill="#a88a80"/><ellipse cx="71.4" cy="73.9" rx="2.2" ry="1.0" fill="#8a9a50"/><ellipse cx="80.2" cy="67.7" rx="2.7" ry="2.4" fill="#a8aa98"/><ellipse cx="66.0" cy="95.6" rx="1.5" ry="0.8" fill="#5a5a50"/><ellipse cx="89.3" cy="130.2" rx="3.0" ry="2.3" fill="#a88a80"/><ellipse cx="82.3" cy="85.3" rx="2.6" ry="1.3" fill="#5a5a50"/><ellipse cx="53.8" cy="132.5" rx="1.2" ry="1.0" fill="#8a9a50"/><ellipse cx="83.8" cy="100.4" rx="1.9" ry="1.0" fill="#7a6a5a"/><ellipse cx="2.3" cy="60.9" rx="1.9" ry="1.2" fill="#94844a"/><ellipse cx="37.7" cy="78.9" rx="2.2" ry="0.9" fill="#6e7a48"/><ellipse cx="43.2" cy="74.8" rx="1.6" ry="0.8" fill="#a8aa98"/><ellipse cx="83.5" cy="63.9" rx="2.7" ry="2.0" fill="#6e7a48"/><ellipse cx="18.6" cy="126.1" rx="1.7" ry="1.1" fill="#a8a890"/><ellipse cx="60.4" cy="112.4" rx="2.1" ry="1.4" fill="#c0bca0"/><ellipse cx="18.2" cy="130.3" rx="1.1" ry="0.5" fill="#a88a80"/><ellipse cx="91.3" cy="70.8" rx="1.8" ry="1.5" fill="#a88a80"/><ellipse cx="66.1" cy="135.9" rx="1.9" ry="0.8" fill="#c0bca0"/><ellipse cx="81.8" cy="55.8" rx="2.4" ry="1.3" fill="#c0bca0"/><ellipse cx="47.6" cy="73.0" rx="1.5" ry="1.2" fill="#94844a"/><ellipse cx="84.0" cy="101.8" rx="1.5" ry="0.8" fill="#a8a890"/><ellipse cx="63.4" cy="71.1" rx="2.3" ry="1.0" fill="#8a9a50"/><ellipse cx="41.8" cy="95.8" rx="2.1" ry="0.9" fill="#4a4a40"/><ellipse cx="55.7" cy="96.7" rx="1.8" ry="1.3" fill="#a8a890"/><ellipse cx="27.1" cy="118.1" rx="1.5" ry="0.8" fill="#94844a"/><ellipse cx="2.7" cy="121.5" rx="1.3" ry="1.1" fill="#4a4a40"/><ellipse cx="43.9" cy="117.6" rx="1.8" ry="1.5" fill="#a8aa98"/><ellipse cx="5.7" cy="50.3" rx="2.6" ry="2.2" fill="#a88a80"/><ellipse cx="62.5" cy="120.7" rx="2.0" ry="1.3" fill="#94844a"/><ellipse cx="70.7" cy="96.1" rx="2.2" ry="1.7" fill="#8a9a50"/><ellipse cx="57.8" cy="67.1" rx="1.9" ry="1.5" fill="#c0bca0"/><ellipse cx="24.7" cy="97.3" rx="2.7" ry="1.9" fill="#7a6a5a"/><ellipse cx="3.4" cy="102.5" rx="2.4" ry="1.7" fill="#a8a890"/><ellipse cx="30.9" cy="103.6" rx="2.2" ry="1.8" fill="#94844a"/><ellipse cx="42.0" cy="69.8" rx="2.6" ry="1.1" fill="#a8a890"/><ellipse cx="54.0" cy="97.2" rx="2.6" ry="1.3" fill="#a8a890"/><ellipse cx="5.1" cy="85.7" rx="2.4" ry="1.9" fill="#94844a"/><ellipse cx="74.2" cy="119.0" rx="2.0" ry="1.4" fill="#94844a"/><ellipse cx="16.3" cy="69.0" rx="1.3" ry="1.0" fill="#4a4a40"/><ellipse cx="74.7" cy="50.0" rx="1.8" ry="1.1" fill="#c0bca0"/><ellipse cx="66.9" cy="137.8" rx="1.3" ry="1.0" fill="#4a4a40"/><ellipse cx="93.7" cy="58.2" rx="1.9" ry="1.5" fill="#6e7a48"/><ellipse cx="0.3" cy="84.2" rx="2.1" ry="0.9" fill="#94844a"/><ellipse cx="28.3" cy="85.6" rx="1.2" ry="0.5" fill="#4a4a40"/><ellipse cx="21.8" cy="68.8" rx="2.1" ry="1.1" fill="#a8aa98"/><ellipse cx="8.2" cy="66.3" rx="1.6" ry="1.4" fill="#4a4a40"/><ellipse cx="20.7" cy="59.7" rx="2.2" ry="1.9" fill="#a88a80"/><ellipse cx="53.9" cy="133.4" rx="2.8" ry="2.4" fill="#a8a890"/><ellipse cx="43.9" cy="82.5" rx="2.7" ry="1.6" fill="#6e7a48"/><ellipse cx="20.5" cy="78.0" rx="1.4" ry="0.9" fill="#a8a890"/><ellipse cx="45.6" cy="83.2" rx="2.2" ry="1.7" fill="#a8aa98"/><ellipse cx="42.5" cy="141.3" rx="2.4" ry="2.0" fill="#c0bca0"/><ellipse cx="51.3" cy="85.1" rx="1.1" ry="0.6" fill="#7a6a5a"/><ellipse cx="59.0" cy="94.9" rx="2.5" ry="1.6" fill="#4a4a40"/><ellipse cx="87.7" cy="114.1" rx="1.5" ry="0.9" fill="#a8a890"/><ellipse cx="69.2" cy="120.1" rx="1.3" ry="0.7" fill="#8a9a50"/><ellipse cx="1.9" cy="75.6" rx="1.8" ry="0.8" fill="#5a5a50"/><ellipse cx="30.9" cy="119.5" rx="2.0" ry="0.9" fill="#5a5a50"/><ellipse cx="57.8" cy="91.9" rx="1.4" ry="0.9" fill="#a8a890"/><ellipse cx="3.0" cy="74.6" rx="1.8" ry="1.2" fill="#a8a890"/><ellipse cx="49.1" cy="97.7" rx="1.6" ry="1.0" fill="#5a5a50"/><ellipse cx="14.0" cy="64.1" rx="1.6" ry="1.2" fill="#5a5a50"/><ellipse cx="13.0" cy="94.6" rx="1.7" ry="0.8" fill="#a88a80"/><ellipse cx="32.8" cy="65.1" rx="1.1" ry="0.4" fill="#a8aa98"/><ellipse cx="53.8" cy="123.3" rx="3.0" ry="1.6" fill="#8a9a50"/><ellipse cx="87.3" cy="65.2" rx="2.4" ry="1.7" fill="#a88a80"/><ellipse cx="22.3" cy="106.0" rx="1.2" ry="0.7" fill="#5a5a50"/><ellipse cx="46.8" cy="92.0" rx="2.9" ry="1.6" fill="#7a6a5a"/><ellipse cx="21.1" cy="134.7" rx="1.4" ry="1.1" fill="#a88a80"/><ellipse cx="63.2" cy="67.5" rx="1.2" ry="0.7" fill="#5a5a50"/><ellipse cx="76.4" cy="90.9" rx="1.5" ry="1.3" fill="#7a6a5a"/><ellipse cx="66.5" cy="46.3" rx="1.8" ry="1.0" fill="#8a9a50"/><ellipse cx="86.7" cy="70.7" rx="1.8" ry="1.4" fill="#7a6a5a"/><ellipse cx="44.5" cy="75.9" rx="1.5" ry="0.6" fill="#a88a80"/><ellipse cx="30.7" cy="80.6" rx="1.6" ry="1.3" fill="#a8a890"/><ellipse cx="61.0" cy="81.7" rx="1.7" ry="1.4" fill="#6e7a48"/><ellipse cx="54.7" cy="136.4" rx="2.5" ry="1.8" fill="#4a4a40"/><ellipse cx="51.6" cy="104.1" rx="1.1" ry="0.5" fill="#a8aa98"/><ellipse cx="83.6" cy="81.4" rx="2.8" ry="1.2" fill="#a8a890"/><ellipse cx="64.9" cy="70.7" rx="2.0" ry="1.3" fill="#6e7a48"/><ellipse cx="14.2" cy="62.9" rx="1.5" ry="1.1" fill="#c0bca0"/><ellipse cx="49.5" cy="134.8" rx="3.0" ry="1.2" fill="#94844a"/><ellipse cx="46.9" cy="107.7" rx="2.1" ry="1.5" fill="#94844a"/><ellipse cx="84.0" cy="111.7" rx="2.6" ry="1.4" fill="#8a9a50"/><ellipse cx="84.2" cy="74.7" rx="2.4" ry="1.8" fill="#a8a890"/><ellipse cx="91.6" cy="124.8" rx="1.3" ry="0.9" fill="#a8aa98"/><ellipse cx="76.5" cy="72.8" rx="1.8" ry="1.1" fill="#94844a"/><ellipse cx="47.3" cy="107.3" rx="1.7" ry="1.3" fill="#94844a"/><ellipse cx="70.1" cy="130.0" rx="3.0" ry="2.4" fill="#7a6a5a"/><ellipse cx="45.1" cy="33.0" rx="4.0" ry="1.9" fill="#7a7870"/><ellipse cx="94.7" cy="27.4" rx="3.9" ry="2.5" fill="#a4a29a"/><ellipse cx="53.0" cy="33.2" rx="2.4" ry="1.5" fill="#a4a29a"/><ellipse cx="32.3" cy="18.7" rx="3.7" ry="1.9" fill="#6a6a60"/><ellipse cx="64.7" cy="37.5" rx="2.3" ry="1.9" fill="#a4a29a"/><ellipse cx="8.6" cy="43.6" rx="4.8" ry="2.2" fill="#8a9468"/><ellipse cx="92.3" cy="29.3" rx="4.6" ry="3.2" fill="#7a7870"/><ellipse cx="52.7" cy="28.2" rx="2.3" ry="1.6" fill="#8a9468"/><ellipse cx="45.3" cy="24.3" rx="2.1" ry="1.6" fill="#a4a29a"/><ellipse cx="92.7" cy="33.2" rx="3.1" ry="1.8" fill="#8a9468"/><ellipse cx="64.0" cy="15.6" rx="2.7" ry="1.6" fill="#a4a29a"/><ellipse cx="2.7" cy="38.3" rx="3.3" ry="2.2" fill="#a4a29a"/><ellipse cx="64.2" cy="13.4" rx="2.6" ry="1.8" fill="#a4a29a"/><ellipse cx="16.9" cy="34.3" rx="2.1" ry="1.1" fill="#6a6a60"/><ellipse cx="57.2" cy="35.2" rx="3.5" ry="2.1" fill="#6a6a60"/><ellipse cx="26.8" cy="27.2" rx="4.9" ry="3.1" fill="#a4a29a"/><ellipse cx="44.1" cy="29.6" rx="2.5" ry="2.0" fill="#a4a29a"/><ellipse cx="86.6" cy="12.2" rx="2.8" ry="2.2" fill="#6a6a60"/><ellipse cx="17.1" cy="37.4" rx="3.5" ry="1.8" fill="#7a7870"/><ellipse cx="93.5" cy="44.0" rx="3.5" ry="1.4" fill="#6a6a60"/><ellipse cx="83.8" cy="33.4" rx="2.8" ry="1.3" fill="#8a9468"/><ellipse cx="46.5" cy="23.3" rx="4.1" ry="2.5" fill="#a4a29a"/><ellipse cx="42.6" cy="31.7" rx="2.1" ry="1.2" fill="#8a9468"/><ellipse cx="66.9" cy="18.9" rx="2.9" ry="1.5" fill="#7a7870"/><ellipse cx="65.9" cy="16.2" rx="4.7" ry="2.8" fill="#a4a29a"/><ellipse cx="19.0" cy="27.1" rx="2.2" ry="1.5" fill="#6a6a60"/><ellipse cx="72.2" cy="25.4" rx="3.8" ry="3.2" fill="#a4a29a"/><ellipse cx="55.1" cy="23.1" rx="3.1" ry="2.4" fill="#a4a29a"/><ellipse cx="1.6" cy="34.7" rx="4.7" ry="3.8" fill="#7a7870"/><ellipse cx="86.5" cy="29.1" rx="4.4" ry="2.6" fill="#7a7870"/><ellipse cx="67.5" cy="18.0" rx="2.8" ry="2.2" fill="#8a9468"/><ellipse cx="59.1" cy="16.0" rx="3.6" ry="2.7" fill="#8a9468"/><ellipse cx="55.2" cy="14.3" rx="3.1" ry="1.4" fill="#6a6a60"/><ellipse cx="13.5" cy="14.9" rx="2.9" ry="2.2" fill="#8a9468"/><ellipse cx="34.7" cy="13.0" rx="3.5" ry="2.2" fill="#a4a29a"/><ellipse cx="5.4" cy="31.0" rx="3.4" ry="2.8" fill="#7a7870"/><ellipse cx="89.7" cy="12.2" rx="3.1" ry="1.7" fill="#a4a29a"/><ellipse cx="65.4" cy="21.5" rx="3.5" ry="1.7" fill="#6a6a60"/><ellipse cx="15.4" cy="26.9" rx="3.8" ry="3.1" fill="#a4a29a"/><ellipse cx="43.7" cy="37.1" rx="2.1" ry="1.7" fill="#8a9468"/><ellipse cx="51.1" cy="36.4" rx="3.2" ry="2.3" fill="#7a7870"/><ellipse cx="92.4" cy="29.7" rx="4.0" ry="2.3" fill="#7a7870"/><ellipse cx="30.6" cy="28.0" rx="3.1" ry="1.7" fill="#a4a29a"/><ellipse cx="45.3" cy="37.6" rx="2.4" ry="1.6" fill="#8a9468"/><ellipse cx="76.3" cy="21.1" rx="4.8" ry="3.4" fill="#8a9468"/><ellipse cx="77.2" cy="37.3" rx="3.8" ry="1.8" fill="#6a6a60"/><ellipse cx="60.9" cy="39.0" rx="3.8" ry="3.0" fill="#8a9468"/><ellipse cx="40.3" cy="33.1" rx="3.0" ry="2.4" fill="#8a9468"/><ellipse cx="36.5" cy="24.8" rx="4.4" ry="2.1" fill="#a4a29a"/><ellipse cx="79.4" cy="15.5" rx="2.8" ry="2.4" fill="#6a6a60"/><ellipse cx="93.1" cy="41.3" rx="4.3" ry="3.6" fill="#6a6a60"/><ellipse cx="79.1" cy="18.8" rx="4.6" ry="1.9" fill="#6a6a60"/><ellipse cx="4.0" cy="37.9" rx="2.6" ry="1.3" fill="#6a6a60"/><ellipse cx="88.1" cy="43.4" rx="4.3" ry="2.9" fill="#7a7870"/><ellipse cx="57.7" cy="15.3" rx="4.1" ry="2.7" fill="#8a9468"/><ellipse cx="9.3" cy="12.2" rx="2.4" ry="1.4" fill="#8a9468"/><ellipse cx="60.4" cy="27.0" rx="3.9" ry="2.3" fill="#8a9468"/><ellipse cx="84.8" cy="12.9" rx="4.5" ry="1.9" fill="#a4a29a"/><ellipse cx="46.7" cy="39.4" rx="4.1" ry="3.6" fill="#8a9468"/><ellipse cx="52.1" cy="42.8" rx="3.1" ry="1.4" fill="#a4a29a"/>
</g>
<path d="M40,56 C42,50 46,48 50,50 L54,53 C58,55 62,58 66,61 L69,64 L66,67 C62,67 58,67 55,68 C54,71 56,74 56,78 L57,97 L57,108 L58,119 L51,119 L51,106 C48,102 42,101 38,102 L34,108 L33,119 L28,119 L29,106 C27,95 27,85 29,76 C31,68 35,61 40,56Z" fill="#141414"/>
<path d="M55,58 C60,59 64,61 69,64 L66,67 C62,67 58,67 55,66Z" fill="#a4a4a2"/>
<path d="M29,109 L28,119 L33,119 L33.5,109Z M51,108 L51,119 L58,119 L57.5,108Z" fill="#b89070"/>
<path d="M32,88 L38,87 L38,91 L32,92Z M48,88 L54,88 L54,92 L48,92Z" fill="#8a6a48"/>
<circle cx="53" cy="56" r="0.8" fill="#606060"/>
</svg>
<div class="a" style="left:199px;top:20px;width:168px;height:112px;box-shadow:2px 2px 3px 1px rgba(0,0,0,0.45)"></div>
<svg style="left:199px;top:20px;overflow:hidden" width="168" height="112" viewBox="0 0 168 112"><defs><linearGradient id="s2" x1="0" y1="0" x2="0" y2="1"><stop offset="0" stop-color="#d6e4f4"/><stop offset="0.6" stop-color="#ccd6e0"/><stop offset="1" stop-color="#b8c0c8"/></linearGradient><filter id="tx2" x="0" y="0" width="100%" height="100%" color-interpolation-filters="sRGB"><feTurbulence type="fractalNoise" baseFrequency="0.4" numOctaves="3" seed="5" result="n"/><feColorMatrix in="n" type="matrix" values="0.33 0.33 0.33 0 0  0.33 0.33 0.33 0 0  0.33 0.33 0.33 0 0  0 0 0 0 1" result="g"/><feComposite in="SourceGraphic" in2="g" operator="arithmetic" k1="0" k2="1" k3="0.8" k4="-0.4" result="c"/><feComposite in="c" in2="SourceAlpha" operator="in"/></filter></defs>
<clipPath id="c2"><path d="M0,13 L5,17 L7,23 L16,23 L18,31 L27,34 L37,40 L43,44 L47,46 L60,44 L90,43 L122,46 L136,50 L128,56 L136,60 L168,55 V112 H0Z"/></clipPath>
<rect width="168" height="112" fill="url(#s2)"/>
<rect x="118" y="46" width="50" height="18" fill="#b2bcc6"/>
<g filter="url(#tx2)">
<path d="M42,46 L60,44 L75,42 L90,43 L108,43 L122,46 L136,50 L128,56 L100,66 L60,64 L42,58Z" fill="#989490"/>
<path d="M0,13 L5,17 L7,23 L16,23 L18,31 L27,34 L37,40 L43,44 L47,46 L50,60 L0,70Z" fill="#7c6e66"/>
<path d="M0,62 L42,56 L60,62 L100,65 L136,60 L150,57 L168,55 V112 H0Z" fill="#78726a"/>
<path d="M0,29 L14,29 L22,33 L18,38 L0,39Z" fill="#a4aa68"/>
<path d="M22,62 L40,58 L46,66 L32,72 L20,70Z" fill="#7a9848"/>
<path d="M14,76 L30,74 L34,80 L20,84Z" fill="#7e9848"/>
<path d="M56,100 Q90,84 130,78 L160,72 L168,74 V86 Q130,96 100,112 H60Z" fill="#82843e"/>
<path d="M0,88 L30,90 L50,112 H0Z" fill="#6e6862"/>
<path d="M60,70 L90,66 L120,70 L100,84 L70,82Z" fill="#666460"/>
</g>
<g clip-path="url(#c2)" filter="url(#tx2)"><ellipse cx="27.7" cy="81.6" rx="2.3" ry="1.5" fill="#4a4844"/><ellipse cx="166.3" cy="60.5" rx="2.9" ry="1.4" fill="#605a54"/><ellipse cx="39.7" cy="14.3" rx="1.7" ry="1.2" fill="#8c867c"/><ellipse cx="24.3" cy="87.6" rx="2.8" ry="2.1" fill="#6c625a"/><ellipse cx="167.6" cy="86.4" rx="2.8" ry="1.9" fill="#5a5650"/><ellipse cx="160.7" cy="66.9" rx="2.4" ry="1.7" fill="#7a8a48"/><ellipse cx="3.9" cy="86.6" rx="1.2" ry="0.9" fill="#5a5650"/><ellipse cx="76.1" cy="68.1" rx="1.7" ry="1.1" fill="#9a948a"/><ellipse cx="111.7" cy="60.1" rx="2.6" ry="1.2" fill="#4a4844"/><ellipse cx="35.0" cy="108.9" rx="2.8" ry="2.2" fill="#8c867c"/><ellipse cx="20.6" cy="60.7" rx="2.7" ry="1.3" fill="#9a948a"/><ellipse cx="149.1" cy="54.1" rx="1.7" ry="1.1" fill="#6c625a"/><ellipse cx="53.4" cy="61.5" rx="1.5" ry="1.3" fill="#9a948a"/><ellipse cx="120.6" cy="111.3" rx="2.0" ry="1.3" fill="#605a54"/><ellipse cx="100.7" cy="65.2" rx="2.1" ry="1.2" fill="#8c867c"/><ellipse cx="30.4" cy="30.7" rx="1.7" ry="1.5" fill="#7a8a48"/><ellipse cx="128.0" cy="105.1" rx="1.5" ry="0.7" fill="#9a948a"/><ellipse cx="130.5" cy="50.7" rx="2.4" ry="1.7" fill="#4a4844"/><ellipse cx="68.4" cy="110.9" rx="2.9" ry="2.0" fill="#7a8a48"/><ellipse cx="82.5" cy="50.8" rx="1.5" ry="1.3" fill="#9a948a"/><ellipse cx="94.4" cy="57.0" rx="1.8" ry="1.4" fill="#5a5650"/><ellipse cx="140.6" cy="19.1" rx="1.5" ry="0.8" fill="#6c625a"/><ellipse cx="41.8" cy="52.7" rx="2.7" ry="2.0" fill="#9a948a"/><ellipse cx="165.2" cy="87.1" rx="2.0" ry="1.0" fill="#605a54"/><ellipse cx="153.1" cy="60.9" rx="2.9" ry="2.5" fill="#7a8a48"/><ellipse cx="133.6" cy="100.4" rx="2.2" ry="1.4" fill="#a8a298"/><ellipse cx="51.7" cy="66.4" rx="1.6" ry="1.2" fill="#5a5650"/><ellipse cx="64.2" cy="26.3" rx="2.4" ry="1.3" fill="#7a8a48"/><ellipse cx="108.2" cy="97.5" rx="2.2" ry="1.1" fill="#6c625a"/><ellipse cx="126.3" cy="93.6" rx="1.3" ry="0.6" fill="#6c625a"/><ellipse cx="15.8" cy="16.5" rx="1.9" ry="0.9" fill="#8c867c"/><ellipse cx="110.1" cy="26.4" rx="2.1" ry="1.2" fill="#a8a298"/><ellipse cx="149.2" cy="74.9" rx="1.4" ry="1.1" fill="#4a4844"/><ellipse cx="119.3" cy="67.9" rx="1.1" ry="0.8" fill="#5a5650"/><ellipse cx="132.8" cy="14.8" rx="1.9" ry="0.8" fill="#9a948a"/><ellipse cx="143.5" cy="36.9" rx="2.9" ry="2.1" fill="#5a5650"/><ellipse cx="41.1" cy="29.3" rx="2.5" ry="2.2" fill="#605a54"/><ellipse cx="134.9" cy="62.0" rx="2.1" ry="1.4" fill="#5a5650"/><ellipse cx="85.4" cy="86.0" rx="2.9" ry="1.6" fill="#605a54"/><ellipse cx="127.3" cy="32.6" rx="2.2" ry="1.3" fill="#4a4844"/><ellipse cx="59.7" cy="45.2" rx="3.0" ry="1.4" fill="#8c867c"/><ellipse cx="109.5" cy="75.4" rx="2.6" ry="2.3" fill="#605a54"/><ellipse cx="104.4" cy="15.9" rx="2.3" ry="1.4" fill="#605a54"/><ellipse cx="86.2" cy="99.8" rx="1.1" ry="0.5" fill="#6c625a"/><ellipse cx="7.1" cy="41.0" rx="2.2" ry="1.3" fill="#6c625a"/><ellipse cx="76.6" cy="37.2" rx="1.8" ry="1.1" fill="#8c867c"/><ellipse cx="6.3" cy="30.9" rx="1.7" ry="1.2" fill="#4a4844"/><ellipse cx="131.0" cy="75.4" rx="2.5" ry="1.8" fill="#3e3c3a"/><ellipse cx="41.2" cy="103.8" rx="1.8" ry="1.3" fill="#605a54"/><ellipse cx="161.9" cy="110.9" rx="1.0" ry="0.6" fill="#3e3c3a"/><ellipse cx="147.1" cy="84.2" rx="1.2" ry="0.6" fill="#605a54"/><ellipse cx="50.8" cy="106.5" rx="2.5" ry="1.6" fill="#8c867c"/><ellipse cx="166.5" cy="30.3" rx="1.9" ry="1.4" fill="#7a8a48"/><ellipse cx="107.8" cy="80.8" rx="1.5" ry="1.3" fill="#7a8a48"/><ellipse cx="86.5" cy="106.6" rx="2.9" ry="2.5" fill="#605a54"/><ellipse cx="33.6" cy="72.6" rx="1.6" ry="0.9" fill="#6c625a"/><ellipse cx="78.5" cy="56.8" rx="2.2" ry="1.2" fill="#9a948a"/><ellipse cx="112.2" cy="74.9" rx="1.2" ry="1.1" fill="#4a4844"/><ellipse cx="5.8" cy="93.4" rx="2.9" ry="2.2" fill="#5a5650"/><ellipse cx="12.6" cy="70.8" rx="1.8" ry="1.1" fill="#a8a298"/><ellipse cx="40.4" cy="14.7" rx="2.1" ry="0.9" fill="#3e3c3a"/><ellipse cx="32.0" cy="50.3" rx="1.0" ry="0.5" fill="#6c625a"/><ellipse cx="88.9" cy="18.8" rx="1.4" ry="0.8" fill="#605a54"/><ellipse cx="41.0" cy="70.3" rx="2.6" ry="1.8" fill="#a8a298"/><ellipse cx="148.4" cy="15.7" rx="2.2" ry="1.0" fill="#4a4844"/><ellipse cx="25.6" cy="62.7" rx="2.1" ry="1.4" fill="#a8a298"/><ellipse cx="79.1" cy="92.4" rx="1.7" ry="0.9" fill="#7a8a48"/><ellipse cx="48.4" cy="76.7" rx="1.0" ry="0.8" fill="#8c867c"/><ellipse cx="31.3" cy="23.6" rx="2.7" ry="1.5" fill="#7a8a48"/><ellipse cx="9.9" cy="17.6" rx="2.0" ry="1.5" fill="#6c625a"/><ellipse cx="26.6" cy="24.2" rx="2.9" ry="1.9" fill="#6c625a"/><ellipse cx="33.4" cy="33.0" rx="2.9" ry="1.8" fill="#7a8a48"/><ellipse cx="139.0" cy="34.9" rx="1.1" ry="0.6" fill="#605a54"/><ellipse cx="106.3" cy="77.0" rx="1.0" ry="0.6" fill="#a8a298"/><ellipse cx="27.2" cy="97.4" rx="2.6" ry="2.2" fill="#5a5650"/><ellipse cx="36.5" cy="90.2" rx="2.8" ry="1.9" fill="#8c867c"/><ellipse cx="163.0" cy="52.2" rx="2.9" ry="2.5" fill="#7a8a48"/><ellipse cx="1.9" cy="48.5" rx="2.2" ry="1.6" fill="#6c625a"/><ellipse cx="108.7" cy="29.8" rx="2.9" ry="1.9" fill="#6c625a"/><ellipse cx="34.7" cy="111.8" rx="2.1" ry="1.7" fill="#7a8a48"/><ellipse cx="152.9" cy="37.5" rx="2.2" ry="1.3" fill="#7a8a48"/><ellipse cx="96.2" cy="111.4" rx="2.8" ry="2.5" fill="#5a5650"/><ellipse cx="165.4" cy="86.5" rx="2.5" ry="1.3" fill="#605a54"/><ellipse cx="87.9" cy="101.7" rx="2.0" ry="0.9" fill="#4a4844"/><ellipse cx="111.2" cy="74.1" rx="1.9" ry="1.2" fill="#4a4844"/><ellipse cx="109.3" cy="38.8" rx="1.9" ry="1.1" fill="#a8a298"/><ellipse cx="80.2" cy="18.0" rx="2.7" ry="1.4" fill="#7a8a48"/><ellipse cx="98.5" cy="92.7" rx="2.5" ry="1.9" fill="#9a948a"/><ellipse cx="63.3" cy="52.6" rx="1.0" ry="0.7" fill="#3e3c3a"/><ellipse cx="96.8" cy="111.8" rx="1.4" ry="0.7" fill="#605a54"/><ellipse cx="136.5" cy="61.3" rx="1.1" ry="0.6" fill="#9a948a"/><ellipse cx="84.0" cy="59.2" rx="1.8" ry="1.3" fill="#8c867c"/><ellipse cx="145.4" cy="87.6" rx="1.7" ry="0.9" fill="#a8a298"/><ellipse cx="133.2" cy="105.0" rx="1.4" ry="1.2" fill="#8c867c"/><ellipse cx="125.3" cy="38.4" rx="1.3" ry="1.0" fill="#3e3c3a"/><ellipse cx="17.5" cy="74.5" rx="2.3" ry="1.5" fill="#9a948a"/><ellipse cx="83.6" cy="83.9" rx="1.4" ry="1.1" fill="#7a8a48"/><ellipse cx="154.8" cy="65.2" rx="1.0" ry="0.8" fill="#3e3c3a"/><ellipse cx="9.7" cy="82.2" rx="1.8" ry="0.8" fill="#605a54"/><ellipse cx="3.6" cy="85.0" rx="2.2" ry="1.4" fill="#605a54"/><ellipse cx="90.3" cy="67.8" rx="1.9" ry="0.8" fill="#7a8a48"/><ellipse cx="24.0" cy="53.4" rx="1.9" ry="1.4" fill="#605a54"/><ellipse cx="98.5" cy="57.0" rx="1.5" ry="1.2" fill="#a8a298"/><ellipse cx="141.7" cy="89.9" rx="2.8" ry="2.2" fill="#7a8a48"/><ellipse cx="82.3" cy="30.2" rx="2.6" ry="1.5" fill="#7a8a48"/><ellipse cx="50.3" cy="108.5" rx="1.9" ry="1.0" fill="#5a5650"/><ellipse cx="104.9" cy="97.0" rx="1.4" ry="0.7" fill="#605a54"/><ellipse cx="108.1" cy="75.6" rx="1.2" ry="0.6" fill="#4a4844"/><ellipse cx="90.5" cy="22.3" rx="1.5" ry="1.0" fill="#8c867c"/><ellipse cx="41.1" cy="56.3" rx="2.6" ry="2.2" fill="#5a5650"/><ellipse cx="67.1" cy="108.0" rx="2.6" ry="1.9" fill="#6c625a"/><ellipse cx="5.8" cy="62.8" rx="2.8" ry="2.2" fill="#a8a298"/><ellipse cx="30.6" cy="104.8" rx="1.2" ry="1.0" fill="#a8a298"/><ellipse cx="120.9" cy="66.0" rx="1.3" ry="0.8" fill="#a8a298"/><ellipse cx="110.2" cy="52.2" rx="2.6" ry="1.1" fill="#3e3c3a"/><ellipse cx="98.3" cy="61.7" rx="2.6" ry="1.2" fill="#9a948a"/><ellipse cx="52.4" cy="52.3" rx="1.5" ry="1.1" fill="#4a4844"/><ellipse cx="8.2" cy="87.1" rx="2.7" ry="1.7" fill="#8c867c"/><ellipse cx="105.5" cy="60.4" rx="2.1" ry="1.2" fill="#4a4844"/><ellipse cx="7.8" cy="75.4" rx="2.2" ry="1.4" fill="#5a5650"/><ellipse cx="71.5" cy="33.6" rx="1.1" ry="0.5" fill="#7a8a48"/><ellipse cx="2.2" cy="89.8" rx="2.7" ry="2.4" fill="#4a4844"/><ellipse cx="123.7" cy="65.8" rx="1.8" ry="0.9" fill="#9a948a"/><ellipse cx="116.2" cy="61.1" rx="1.7" ry="1.4" fill="#9a948a"/><ellipse cx="48.3" cy="87.5" rx="2.4" ry="1.8" fill="#8c867c"/><ellipse cx="147.7" cy="38.1" rx="3.0" ry="1.7" fill="#6c625a"/><ellipse cx="137.9" cy="90.7" rx="2.4" ry="1.0" fill="#3e3c3a"/><ellipse cx="153.9" cy="34.8" rx="3.0" ry="2.3" fill="#4a4844"/><ellipse cx="132.7" cy="99.5" rx="2.8" ry="2.3" fill="#4a4844"/><ellipse cx="83.9" cy="82.8" rx="2.0" ry="1.8" fill="#6c625a"/><ellipse cx="64.0" cy="105.0" rx="2.5" ry="1.7" fill="#5a5650"/><ellipse cx="23.0" cy="14.4" rx="1.2" ry="0.7" fill="#a8a298"/><ellipse cx="8.2" cy="76.4" rx="1.2" ry="0.8" fill="#3e3c3a"/><ellipse cx="109.7" cy="99.5" rx="1.6" ry="1.2" fill="#605a54"/><ellipse cx="19.5" cy="48.2" rx="2.4" ry="2.0" fill="#3e3c3a"/><ellipse cx="77.8" cy="102.9" rx="2.8" ry="1.5" fill="#7a8a48"/><ellipse cx="22.7" cy="47.8" rx="2.9" ry="1.7" fill="#9a948a"/><ellipse cx="137.5" cy="41.3" rx="2.6" ry="1.0" fill="#7a8a48"/><ellipse cx="7.3" cy="91.3" rx="2.4" ry="1.6" fill="#5a5650"/><ellipse cx="134.9" cy="31.0" rx="2.1" ry="1.5" fill="#9a948a"/><ellipse cx="142.3" cy="74.9" rx="1.3" ry="1.0" fill="#8c867c"/><ellipse cx="29.2" cy="85.7" rx="1.8" ry="1.0" fill="#6c625a"/><ellipse cx="64.5" cy="91.9" rx="1.6" ry="1.4" fill="#5a5650"/><ellipse cx="41.0" cy="45.5" rx="1.6" ry="1.0" fill="#4a4844"/><ellipse cx="167.3" cy="22.2" rx="2.9" ry="2.5" fill="#a8a298"/><ellipse cx="119.6" cy="105.5" rx="1.4" ry="1.0" fill="#a8a298"/><ellipse cx="164.9" cy="100.3" rx="2.8" ry="1.2" fill="#605a54"/><ellipse cx="81.7" cy="103.1" rx="1.3" ry="0.9" fill="#8c867c"/><ellipse cx="103.5" cy="14.9" rx="2.5" ry="2.3" fill="#605a54"/><ellipse cx="23.8" cy="76.3" rx="2.3" ry="1.0" fill="#a8a298"/><ellipse cx="15.1" cy="53.9" rx="3.0" ry="2.5" fill="#a8a298"/><ellipse cx="82.1" cy="40.0" rx="2.1" ry="1.5" fill="#4a4844"/><ellipse cx="50.7" cy="104.9" rx="1.3" ry="1.1" fill="#7a8a48"/><ellipse cx="93.8" cy="89.4" rx="1.8" ry="1.4" fill="#7a8a48"/><ellipse cx="89.6" cy="19.0" rx="1.2" ry="0.6" fill="#4a4844"/><ellipse cx="77.3" cy="60.3" rx="2.0" ry="1.1" fill="#605a54"/><ellipse cx="79.5" cy="89.6" rx="2.4" ry="1.3" fill="#a8a298"/><ellipse cx="89.8" cy="87.7" rx="2.3" ry="2.0" fill="#3e3c3a"/><ellipse cx="34.2" cy="31.6" rx="2.1" ry="1.8" fill="#9a948a"/><ellipse cx="15.9" cy="84.9" rx="1.5" ry="1.2" fill="#6c625a"/><ellipse cx="100.3" cy="40.5" rx="2.0" ry="0.9" fill="#8c867c"/><ellipse cx="142.4" cy="69.2" rx="1.1" ry="1.0" fill="#9a948a"/><ellipse cx="117.0" cy="64.0" rx="2.1" ry="1.9" fill="#4a4844"/><ellipse cx="107.6" cy="82.5" rx="3.0" ry="2.5" fill="#6c625a"/><ellipse cx="43.8" cy="81.9" rx="1.9" ry="0.8" fill="#3e3c3a"/><ellipse cx="162.7" cy="54.9" rx="2.8" ry="2.0" fill="#3e3c3a"/><ellipse cx="156.5" cy="75.7" rx="2.7" ry="1.8" fill="#4a4844"/><ellipse cx="10.0" cy="49.5" rx="1.7" ry="1.0" fill="#6c625a"/><ellipse cx="86.3" cy="39.8" rx="1.3" ry="1.1" fill="#9a948a"/><ellipse cx="17.4" cy="78.2" rx="2.8" ry="1.4" fill="#9a948a"/><ellipse cx="53.0" cy="65.6" rx="2.8" ry="2.0" fill="#5a5650"/><ellipse cx="160.7" cy="97.1" rx="2.0" ry="1.6" fill="#9a948a"/><ellipse cx="28.3" cy="52.9" rx="2.6" ry="1.7" fill="#5a5650"/><ellipse cx="164.9" cy="28.3" rx="2.9" ry="1.7" fill="#a8a298"/><ellipse cx="27.6" cy="92.6" rx="1.8" ry="0.8" fill="#4a4844"/><ellipse cx="108.3" cy="95.2" rx="1.2" ry="1.1" fill="#5a5650"/><ellipse cx="19.3" cy="51.4" rx="2.3" ry="1.6" fill="#a8a298"/><ellipse cx="45.9" cy="93.6" rx="2.8" ry="1.2" fill="#605a54"/><ellipse cx="96.7" cy="28.4" rx="2.0" ry="0.9" fill="#8c867c"/><ellipse cx="76.7" cy="54.4" rx="1.9" ry="1.2" fill="#3e3c3a"/><ellipse cx="148.5" cy="92.5" rx="1.8" ry="1.3" fill="#5a5650"/><ellipse cx="129.6" cy="86.6" rx="2.1" ry="1.1" fill="#3e3c3a"/><ellipse cx="45.7" cy="91.9" rx="1.9" ry="1.5" fill="#6c625a"/><ellipse cx="63.9" cy="47.6" rx="2.9" ry="2.5" fill="#4a4844"/><ellipse cx="52.6" cy="96.4" rx="1.6" ry="1.3" fill="#a8a298"/><ellipse cx="4.4" cy="75.8" rx="3.0" ry="1.3" fill="#8c867c"/><ellipse cx="152.5" cy="106.8" rx="1.9" ry="1.5" fill="#6c625a"/><ellipse cx="55.4" cy="36.3" rx="1.5" ry="1.2" fill="#9a948a"/><ellipse cx="29.7" cy="87.5" rx="1.2" ry="0.7" fill="#6c625a"/><ellipse cx="89.0" cy="108.7" rx="2.0" ry="1.3" fill="#605a54"/><ellipse cx="126.4" cy="28.2" rx="2.6" ry="1.6" fill="#a8a298"/><ellipse cx="32.1" cy="92.1" rx="1.5" ry="1.2" fill="#5a5650"/><ellipse cx="28.3" cy="85.6" rx="1.1" ry="0.8" fill="#4a4844"/><ellipse cx="95.3" cy="104.9" rx="1.6" ry="0.7" fill="#3e3c3a"/><ellipse cx="147.4" cy="88.7" rx="1.1" ry="0.8" fill="#4a4844"/><ellipse cx="154.2" cy="92.1" rx="1.8" ry="0.8" fill="#a8a298"/><ellipse cx="124.8" cy="40.7" rx="1.0" ry="0.9" fill="#5a5650"/><ellipse cx="162.7" cy="68.1" rx="2.2" ry="1.2" fill="#a8a298"/><ellipse cx="119.3" cy="103.2" rx="2.2" ry="1.2" fill="#5a5650"/><ellipse cx="44.0" cy="45.1" rx="1.4" ry="0.6" fill="#9a948a"/><ellipse cx="95.6" cy="95.1" rx="2.0" ry="1.0" fill="#605a54"/><ellipse cx="37.8" cy="16.5" rx="1.2" ry="0.7" fill="#8c867c"/><ellipse cx="133.4" cy="48.0" rx="1.9" ry="1.5" fill="#3e3c3a"/><ellipse cx="11.9" cy="109.0" rx="2.5" ry="1.4" fill="#605a54"/><ellipse cx="111.8" cy="35.3" rx="1.3" ry="0.8" fill="#6c625a"/><ellipse cx="159.3" cy="30.1" rx="2.1" ry="1.3" fill="#3e3c3a"/><ellipse cx="157.9" cy="21.0" rx="1.4" ry="1.1" fill="#9a948a"/><ellipse cx="108.1" cy="78.5" rx="1.4" ry="1.2" fill="#4a4844"/><ellipse cx="34.0" cy="49.9" rx="2.0" ry="0.8" fill="#9a948a"/><ellipse cx="21.9" cy="48.1" rx="1.8" ry="1.6" fill="#3e3c3a"/><ellipse cx="60.4" cy="50.3" rx="2.7" ry="1.9" fill="#7a8a48"/><ellipse cx="146.6" cy="17.2" rx="2.6" ry="1.3" fill="#3e3c3a"/><ellipse cx="106.8" cy="70.6" rx="1.8" ry="1.3" fill="#7a8a48"/><ellipse cx="57.0" cy="68.0" rx="2.5" ry="1.1" fill="#5a5650"/><ellipse cx="134.3" cy="29.4" rx="2.3" ry="1.5" fill="#605a54"/><ellipse cx="26.0" cy="108.6" rx="1.9" ry="1.4" fill="#4a4844"/><ellipse cx="24.8" cy="99.5" rx="2.0" ry="0.9" fill="#a8a298"/><ellipse cx="20.0" cy="68.7" rx="2.0" ry="1.1" fill="#6c625a"/><ellipse cx="157.3" cy="41.9" rx="1.0" ry="0.5" fill="#a8a298"/><ellipse cx="138.2" cy="32.2" rx="1.7" ry="1.0" fill="#7a8a48"/><ellipse cx="74.5" cy="110.3" rx="2.7" ry="1.6" fill="#a8a298"/><ellipse cx="37.4" cy="77.9" rx="1.4" ry="1.0" fill="#4a4844"/><ellipse cx="121.2" cy="62.1" rx="2.2" ry="1.3" fill="#8c867c"/><ellipse cx="59.4" cy="28.7" rx="1.9" ry="1.3" fill="#3e3c3a"/><ellipse cx="92.5" cy="111.5" rx="1.9" ry="1.7" fill="#8c867c"/><ellipse cx="33.3" cy="44.4" rx="2.2" ry="1.1" fill="#5a5650"/><ellipse cx="132.8" cy="50.6" rx="2.4" ry="1.9" fill="#5a5650"/><ellipse cx="29.1" cy="88.2" rx="1.8" ry="1.1" fill="#9a948a"/><ellipse cx="115.2" cy="84.9" rx="1.1" ry="0.6" fill="#6c625a"/><ellipse cx="12.0" cy="74.2" rx="1.8" ry="1.3" fill="#8c867c"/><ellipse cx="74.5" cy="69.7" rx="2.6" ry="1.9" fill="#6c625a"/><ellipse cx="102.9" cy="27.1" rx="2.4" ry="2.0" fill="#4a4844"/><ellipse cx="23.1" cy="77.7" rx="1.0" ry="0.4" fill="#7a8a48"/><ellipse cx="21.6" cy="33.3" rx="2.6" ry="2.2" fill="#605a54"/><ellipse cx="16.1" cy="31.4" rx="1.7" ry="1.0" fill="#3e3c3a"/><ellipse cx="128.8" cy="66.9" rx="1.8" ry="1.6" fill="#5a5650"/><ellipse cx="72.9" cy="110.0" rx="1.3" ry="1.1" fill="#a8a298"/><ellipse cx="142.2" cy="42.4" rx="2.4" ry="1.6" fill="#6c625a"/><ellipse cx="119.7" cy="66.1" rx="1.2" ry="1.0" fill="#3e3c3a"/><ellipse cx="37.9" cy="39.8" rx="1.8" ry="0.8" fill="#7a8a48"/><ellipse cx="1.5" cy="111.0" rx="1.7" ry="1.5" fill="#5a5650"/><ellipse cx="145.5" cy="84.8" rx="2.3" ry="1.9" fill="#7a8a48"/><ellipse cx="20.9" cy="52.5" rx="1.3" ry="0.6" fill="#9a948a"/><ellipse cx="122.9" cy="26.7" rx="2.8" ry="2.0" fill="#a8a298"/><ellipse cx="85.5" cy="39.4" rx="2.1" ry="1.0" fill="#5a5650"/><ellipse cx="164.1" cy="49.4" rx="1.9" ry="1.0" fill="#7a8a48"/><ellipse cx="108.4" cy="102.0" rx="2.6" ry="1.3" fill="#4a4844"/><ellipse cx="100.4" cy="61.0" rx="1.6" ry="1.1" fill="#8c867c"/><ellipse cx="141.9" cy="31.7" rx="2.8" ry="1.3" fill="#6c625a"/><ellipse cx="3.9" cy="99.2" rx="2.6" ry="1.4" fill="#6c625a"/><ellipse cx="103.7" cy="66.8" rx="2.3" ry="1.9" fill="#4a4844"/><ellipse cx="14.5" cy="92.2" rx="1.9" ry="1.4" fill="#8c867c"/><ellipse cx="154.8" cy="107.5" rx="2.6" ry="1.4" fill="#8c867c"/><ellipse cx="45.2" cy="33.0" rx="2.3" ry="1.0" fill="#4a4844"/><ellipse cx="0.6" cy="111.5" rx="1.7" ry="0.7" fill="#a8a298"/><ellipse cx="127.3" cy="68.0" rx="1.7" ry="1.1" fill="#605a54"/><ellipse cx="155.8" cy="26.2" rx="1.4" ry="1.1" fill="#a8a298"/><ellipse cx="0.6" cy="85.0" rx="2.3" ry="1.9" fill="#a8a298"/><ellipse cx="154.1" cy="109.9" rx="1.3" ry="0.5" fill="#4a4844"/><ellipse cx="86.6" cy="99.3" rx="2.6" ry="1.3" fill="#9a948a"/><ellipse cx="46.2" cy="103.5" rx="1.3" ry="0.7" fill="#9a948a"/><ellipse cx="161.9" cy="50.4" rx="2.5" ry="1.7" fill="#605a54"/><ellipse cx="82.2" cy="16.9" rx="2.1" ry="1.7" fill="#6c625a"/><ellipse cx="95.6" cy="22.2" rx="1.2" ry="0.6" fill="#a8a298"/><ellipse cx="38.4" cy="63.1" rx="2.9" ry="2.0" fill="#a8a298"/><ellipse cx="30.1" cy="50.2" rx="2.2" ry="1.3" fill="#5a5650"/><ellipse cx="89.0" cy="104.1" rx="1.0" ry="0.8" fill="#9a948a"/><ellipse cx="48.6" cy="40.4" rx="1.7" ry="1.1" fill="#9a948a"/><ellipse cx="117.8" cy="92.9" rx="2.1" ry="1.2" fill="#6c625a"/><ellipse cx="121.2" cy="14.0" rx="1.1" ry="0.8" fill="#6c625a"/><ellipse cx="78.5" cy="23.9" rx="2.1" ry="0.9" fill="#7a8a48"/><ellipse cx="54.4" cy="103.5" rx="1.9" ry="1.4" fill="#6c625a"/><ellipse cx="37.2" cy="20.5" rx="1.1" ry="0.5" fill="#8c867c"/><ellipse cx="5.6" cy="84.2" rx="1.9" ry="1.3" fill="#3e3c3a"/><ellipse cx="154.0" cy="53.1" rx="1.8" ry="1.5" fill="#9a948a"/><ellipse cx="25.0" cy="106.9" rx="1.2" ry="0.6" fill="#8c867c"/><ellipse cx="104.0" cy="62.8" rx="1.5" ry="1.1" fill="#5a5650"/><ellipse cx="119.7" cy="55.3" rx="2.5" ry="1.5" fill="#4a4844"/><ellipse cx="54.6" cy="80.7" rx="2.6" ry="2.1" fill="#9a948a"/><ellipse cx="91.7" cy="58.5" rx="2.2" ry="1.2" fill="#605a54"/><ellipse cx="25.3" cy="104.7" rx="1.2" ry="0.8" fill="#a8a298"/><ellipse cx="15.1" cy="72.8" rx="1.1" ry="0.7" fill="#3e3c3a"/><ellipse cx="126.5" cy="90.4" rx="1.2" ry="0.9" fill="#9a948a"/><ellipse cx="153.7" cy="86.0" rx="2.7" ry="1.5" fill="#605a54"/><ellipse cx="79.0" cy="37.4" rx="1.1" ry="0.8" fill="#6c625a"/><ellipse cx="47.4" cy="102.1" rx="2.2" ry="1.4" fill="#4a4844"/><ellipse cx="113.6" cy="77.8" rx="2.2" ry="1.5" fill="#7a8a48"/><ellipse cx="155.4" cy="101.7" rx="2.3" ry="1.3" fill="#a8a298"/><ellipse cx="57.7" cy="93.7" rx="2.1" ry="1.8" fill="#9a948a"/><ellipse cx="34.1" cy="46.8" rx="1.2" ry="0.7" fill="#9a948a"/><ellipse cx="68.0" cy="65.0" rx="2.1" ry="0.9" fill="#605a54"/><ellipse cx="154.9" cy="89.6" rx="1.5" ry="0.8" fill="#a8a298"/><ellipse cx="62.8" cy="93.2" rx="2.2" ry="1.1" fill="#9a948a"/><ellipse cx="138.1" cy="16.2" rx="2.8" ry="1.4" fill="#a8a298"/><ellipse cx="57.8" cy="55.9" rx="2.1" ry="1.8" fill="#9a948a"/><ellipse cx="77.3" cy="91.3" rx="1.5" ry="0.8" fill="#6c625a"/><ellipse cx="139.0" cy="47.7" rx="1.7" ry="0.8" fill="#5a5650"/><ellipse cx="139.1" cy="19.3" rx="1.4" ry="1.0" fill="#7a8a48"/><ellipse cx="11.8" cy="38.7" rx="1.5" ry="1.2" fill="#7a8a48"/><ellipse cx="12.7" cy="59.8" rx="3.0" ry="2.6" fill="#605a54"/><ellipse cx="10.6" cy="53.9" rx="2.9" ry="1.2" fill="#9a948a"/><ellipse cx="79.1" cy="19.9" rx="2.3" ry="2.0" fill="#9a948a"/><ellipse cx="92.5" cy="23.8" rx="1.1" ry="0.5" fill="#4a4844"/><ellipse cx="17.3" cy="60.6" rx="2.6" ry="1.3" fill="#6c625a"/><ellipse cx="104.2" cy="79.0" rx="2.5" ry="1.4" fill="#6c625a"/><ellipse cx="137.5" cy="108.3" rx="1.0" ry="0.4" fill="#605a54"/><ellipse cx="147.6" cy="19.1" rx="1.9" ry="1.2" fill="#9a948a"/><ellipse cx="71.5" cy="89.0" rx="1.3" ry="0.8" fill="#605a54"/><ellipse cx="78.6" cy="32.2" rx="2.7" ry="1.6" fill="#a8a298"/><ellipse cx="52.8" cy="95.1" rx="1.2" ry="0.9" fill="#a8a298"/><ellipse cx="105.4" cy="54.6" rx="3.0" ry="2.6" fill="#8c867c"/><ellipse cx="37.4" cy="22.7" rx="2.2" ry="1.0" fill="#5a5650"/><ellipse cx="107.9" cy="98.4" rx="2.4" ry="1.9" fill="#6c625a"/><ellipse cx="161.4" cy="106.3" rx="1.2" ry="0.5" fill="#7a8a48"/><ellipse cx="162.2" cy="30.8" rx="1.4" ry="1.0" fill="#8c867c"/><ellipse cx="97.5" cy="103.5" rx="2.3" ry="1.8" fill="#5a5650"/><ellipse cx="141.5" cy="29.0" rx="2.8" ry="2.2" fill="#7a8a48"/><ellipse cx="100.3" cy="47.6" rx="2.3" ry="2.0" fill="#6c625a"/><ellipse cx="74.0" cy="64.5" rx="2.7" ry="1.1" fill="#3e3c3a"/><ellipse cx="96.0" cy="86.5" rx="2.5" ry="2.2" fill="#8c867c"/><ellipse cx="167.3" cy="31.7" rx="1.8" ry="1.5" fill="#a8a298"/><ellipse cx="155.3" cy="49.3" rx="1.5" ry="0.9" fill="#3e3c3a"/><ellipse cx="64.1" cy="27.0" rx="1.8" ry="1.5" fill="#7a8a48"/><ellipse cx="100.4" cy="23.3" rx="1.7" ry="1.5" fill="#6c625a"/><ellipse cx="100.2" cy="47.5" rx="1.4" ry="1.1" fill="#4a4844"/><ellipse cx="11.9" cy="37.2" rx="2.6" ry="2.2" fill="#4a4844"/><ellipse cx="112.6" cy="104.0" rx="1.4" ry="0.9" fill="#8c867c"/><ellipse cx="99.5" cy="75.4" rx="1.1" ry="1.0" fill="#a8a298"/><ellipse cx="27.2" cy="76.5" rx="1.8" ry="1.1" fill="#7a8a48"/><ellipse cx="66.6" cy="100.2" rx="2.6" ry="1.8" fill="#8c867c"/><ellipse cx="124.7" cy="78.7" rx="1.8" ry="1.0" fill="#4a4844"/><ellipse cx="48.7" cy="99.2" rx="2.5" ry="1.2" fill="#a8a298"/><ellipse cx="18.5" cy="92.0" rx="2.2" ry="1.9" fill="#605a54"/><ellipse cx="154.1" cy="31.2" rx="2.5" ry="1.5" fill="#8c867c"/><ellipse cx="106.2" cy="98.5" rx="2.1" ry="1.0" fill="#3e3c3a"/><ellipse cx="119.5" cy="29.5" rx="1.9" ry="1.6" fill="#3e3c3a"/><ellipse cx="20.5" cy="98.8" rx="2.5" ry="1.2" fill="#605a54"/><ellipse cx="145.1" cy="70.4" rx="2.9" ry="1.9" fill="#5a5650"/><ellipse cx="40.1" cy="88.0" rx="2.5" ry="1.8" fill="#3e3c3a"/><ellipse cx="158.3" cy="92.7" rx="1.9" ry="0.8" fill="#9a948a"/><ellipse cx="154.4" cy="22.3" rx="2.5" ry="1.8" fill="#a8a298"/><ellipse cx="131.0" cy="67.1" rx="1.9" ry="1.1" fill="#3e3c3a"/><ellipse cx="9.0" cy="45.3" rx="2.0" ry="1.0" fill="#9a948a"/><ellipse cx="166.6" cy="85.3" rx="2.5" ry="1.6" fill="#6c625a"/><ellipse cx="133.7" cy="63.1" rx="1.1" ry="0.5" fill="#3e3c3a"/><ellipse cx="40.9" cy="33.0" rx="1.7" ry="1.5" fill="#7a8a48"/><ellipse cx="28.2" cy="86.4" rx="3.0" ry="2.2" fill="#9a948a"/><ellipse cx="155.9" cy="44.6" rx="1.2" ry="1.0" fill="#605a54"/><ellipse cx="144.8" cy="60.9" rx="2.4" ry="1.2" fill="#7a8a48"/><ellipse cx="95.9" cy="32.7" rx="2.2" ry="1.8" fill="#a8a298"/><ellipse cx="54.4" cy="80.8" rx="1.1" ry="0.6" fill="#3e3c3a"/><ellipse cx="68.3" cy="71.5" rx="1.5" ry="0.8" fill="#3e3c3a"/><ellipse cx="127.5" cy="25.4" rx="1.4" ry="0.9" fill="#9a948a"/><ellipse cx="34.1" cy="32.1" rx="1.1" ry="0.8" fill="#3e3c3a"/><ellipse cx="104.0" cy="99.9" rx="1.1" ry="0.9" fill="#a8a298"/><ellipse cx="160.8" cy="105.3" rx="2.1" ry="1.0" fill="#605a54"/><ellipse cx="36.6" cy="20.8" rx="1.7" ry="1.3" fill="#6c625a"/><ellipse cx="68.9" cy="26.3" rx="1.3" ry="0.9" fill="#a8a298"/><ellipse cx="37.5" cy="34.3" rx="1.9" ry="1.1" fill="#9a948a"/><ellipse cx="154.5" cy="64.9" rx="1.7" ry="1.1" fill="#4a4844"/><ellipse cx="120.4" cy="88.6" rx="2.7" ry="1.4" fill="#3e3c3a"/><ellipse cx="66.0" cy="45.5" rx="1.1" ry="0.5" fill="#9a948a"/><ellipse cx="135.3" cy="96.2" rx="2.2" ry="1.1" fill="#a8a298"/><ellipse cx="45.2" cy="36.6" rx="1.7" ry="0.8" fill="#8c867c"/><ellipse cx="65.6" cy="95.3" rx="1.8" ry="1.3" fill="#8c867c"/><ellipse cx="67.7" cy="89.1" rx="2.5" ry="2.1" fill="#8c867c"/><ellipse cx="125.2" cy="41.0" rx="2.2" ry="1.0" fill="#3e3c3a"/><ellipse cx="14.5" cy="50.3" rx="2.4" ry="1.7" fill="#7a8a48"/><ellipse cx="118.0" cy="101.1" rx="1.2" ry="0.6" fill="#8c867c"/><ellipse cx="11.9" cy="42.6" rx="1.4" ry="1.0" fill="#5a5650"/><ellipse cx="144.5" cy="110.6" rx="1.1" ry="0.9" fill="#4a4844"/><ellipse cx="38.4" cy="97.2" rx="2.6" ry="1.4" fill="#5a5650"/><ellipse cx="31.9" cy="60.8" rx="2.8" ry="2.0" fill="#3e3c3a"/><ellipse cx="153.3" cy="101.4" rx="1.2" ry="0.8" fill="#7a8a48"/><ellipse cx="140.7" cy="82.2" rx="2.7" ry="1.8" fill="#3e3c3a"/><ellipse cx="145.0" cy="103.9" rx="1.8" ry="1.6" fill="#9a948a"/><ellipse cx="150.6" cy="47.2" rx="2.6" ry="1.6" fill="#6c625a"/><ellipse cx="155.1" cy="22.9" rx="1.8" ry="1.0" fill="#a8a298"/><ellipse cx="135.9" cy="56.1" rx="1.3" ry="1.1" fill="#5a5650"/><ellipse cx="155.5" cy="24.5" rx="2.8" ry="1.4" fill="#8c867c"/><ellipse cx="159.5" cy="61.3" rx="1.1" ry="0.6" fill="#4a4844"/><ellipse cx="139.0" cy="29.5" rx="1.7" ry="0.9" fill="#7a8a48"/><ellipse cx="46.1" cy="72.8" rx="1.1" ry="0.9" fill="#a8a298"/><ellipse cx="102.2" cy="109.2" rx="1.9" ry="0.9" fill="#8c867c"/><ellipse cx="90.1" cy="39.6" rx="2.7" ry="1.1" fill="#6c625a"/><ellipse cx="32.5" cy="18.2" rx="2.4" ry="1.5" fill="#6c625a"/><ellipse cx="160.5" cy="77.3" rx="1.3" ry="1.1" fill="#8c867c"/><ellipse cx="13.8" cy="75.7" rx="2.9" ry="2.2" fill="#a8a298"/><ellipse cx="166.9" cy="26.4" rx="1.4" ry="0.9" fill="#8c867c"/><ellipse cx="122.7" cy="96.9" rx="2.6" ry="2.2" fill="#4a4844"/><ellipse cx="42.8" cy="94.0" rx="1.2" ry="0.5" fill="#5a5650"/><ellipse cx="82.2" cy="67.4" rx="1.0" ry="0.7" fill="#3e3c3a"/><ellipse cx="152.0" cy="51.7" rx="2.7" ry="2.1" fill="#7a8a48"/><ellipse cx="13.8" cy="91.5" rx="2.1" ry="1.1" fill="#9a948a"/><ellipse cx="139.9" cy="52.6" rx="2.0" ry="1.5" fill="#5a5650"/><ellipse cx="28.8" cy="103.3" rx="2.1" ry="1.0" fill="#3e3c3a"/><ellipse cx="31.6" cy="62.6" rx="2.0" ry="1.5" fill="#9a948a"/><ellipse cx="12.1" cy="99.9" rx="2.9" ry="1.4" fill="#8c867c"/><ellipse cx="90.4" cy="78.3" rx="1.4" ry="1.2" fill="#605a54"/><ellipse cx="35.1" cy="72.8" rx="1.4" ry="1.0" fill="#a8a298"/><ellipse cx="12.7" cy="81.1" rx="2.8" ry="2.6" fill="#5a5650"/><ellipse cx="157.8" cy="88.1" rx="2.5" ry="1.6" fill="#605a54"/><ellipse cx="8.2" cy="75.7" rx="1.3" ry="1.0" fill="#8c867c"/><ellipse cx="90.8" cy="106.6" rx="1.7" ry="1.4" fill="#a8a298"/><ellipse cx="38.9" cy="48.1" rx="1.5" ry="0.8" fill="#a8a298"/><ellipse cx="23.0" cy="88.2" rx="1.2" ry="1.0" fill="#8c867c"/><ellipse cx="148.1" cy="52.2" rx="2.9" ry="1.8" fill="#4a4844"/><ellipse cx="25.4" cy="18.5" rx="2.4" ry="1.2" fill="#4a4844"/><ellipse cx="155.3" cy="31.2" rx="1.8" ry="1.3" fill="#4a4844"/><ellipse cx="15.3" cy="93.9" rx="2.7" ry="2.1" fill="#a8a298"/><ellipse cx="135.5" cy="74.1" rx="2.6" ry="2.0" fill="#7a8a48"/><ellipse cx="1.9" cy="37.3" rx="2.9" ry="2.5" fill="#7a8a48"/><ellipse cx="119.0" cy="96.8" rx="2.4" ry="2.1" fill="#a8a298"/><ellipse cx="162.1" cy="88.0" rx="3.0" ry="1.9" fill="#9a948a"/><ellipse cx="67.1" cy="87.6" rx="2.1" ry="1.3" fill="#8c867c"/><ellipse cx="157.9" cy="41.3" rx="1.5" ry="1.4" fill="#7a8a48"/><ellipse cx="165.5" cy="53.7" rx="2.1" ry="1.0" fill="#5a5650"/><ellipse cx="46.2" cy="57.3" rx="2.6" ry="2.0" fill="#8c867c"/><ellipse cx="44.9" cy="90.3" rx="2.4" ry="1.7" fill="#a8a298"/><ellipse cx="152.2" cy="46.7" rx="1.7" ry="0.9" fill="#605a54"/></g>
<path d="M113,47 Q115,46 116,48 L119,51 L119,59 L109,59 L109,51Z" fill="#262630"/>
<circle cx="113" cy="47" r="1.9" fill="#d8b8a0"/>
<rect x="110.5" y="59" width="5" height="13" fill="#2c4070"/>
<rect x="82" y="78" width="3" height="4" fill="#1a1a1a"/></svg>
<div class="a" style="left:385px;top:20px;width:168px;height:112px;box-shadow:2px 2px 3px 1px rgba(0,0,0,0.45)"></div>
<svg style="left:385px;top:20px;overflow:hidden" width="168" height="112" viewBox="0 0 168 112"><defs><linearGradient id="s3" x1="0" y1="0" x2="0" y2="1"><stop offset="0" stop-color="#a4acb4"/><stop offset="0.24" stop-color="#b6bcc2"/><stop offset="0.32" stop-color="#9aa2ac"/><stop offset="0.55" stop-color="#7e8896"/><stop offset="1" stop-color="#7e8896"/></linearGradient><filter id="tx3" x="0" y="0" width="100%" height="100%" color-interpolation-filters="sRGB"><feTurbulence type="fractalNoise" baseFrequency="0.4" numOctaves="3" seed="9" result="n"/><feColorMatrix in="n" type="matrix" values="0.33 0.33 0.33 0 0  0.33 0.33 0.33 0 0  0.33 0.33 0.33 0 0  0 0 0 0 1" result="g"/><feComposite in="SourceGraphic" in2="g" operator="arithmetic" k1="0" k2="1" k3="0.8" k4="-0.4" result="c"/><feComposite in="c" in2="SourceAlpha" operator="in"/></filter></defs>
<clipPath id="c3"><path d="M0,28 L12,26 L30,27 L45,26 L60,29 L72,31 L82,35 L92,40 L86,45 L75,52 L60,58 L90,58 L106,56 L118,54 L140,45 L159,39 L168,38 V112 H0Z"/></clipPath>
<rect width="168" height="112" fill="url(#s3)"/>

<g filter="url(#tx3)">
<path d="M0,28 L12,26 L30,27 L45,26 L60,29 L72,31 L82,35 L92,40 L86,45 L75,52 L60,58 L26,60 L0,54Z" fill="#8a8680"/>
<path d="M0,44 L30,48 L60,44 L80,42 L90,43 L75,52 L60,58 L26,60 L0,56Z" fill="#56524e"/>
<path d="M0,52 L26,58 L60,62 L90,58 L106,56 L118,54 L140,45 L159,39 L168,38 V112 H0Z" fill="#72706c"/>
<path d="M0,52 L14,55 L24,68 L10,78 L0,76Z" fill="#8a9058"/>
<path d="M50,102 Q80,86 110,94 L100,112 H52Z" fill="#888c46"/>
<path d="M110,104 Q130,90 150,82 L142,100 L122,112 H110Z" fill="#8c8e46"/>
<path d="M130,58 L150,50 L162,60 L140,68Z" fill="#88904e"/>
<path d="M20,80 L60,74 L90,80 L60,92 L30,90Z" fill="#62605e"/>
<path d="M140,60 L168,54 L168,80 L150,76Z" fill="#66645f"/>
</g>
<g clip-path="url(#c3)" filter="url(#tx3)"><ellipse cx="2.1" cy="35.7" rx="1.8" ry="1.3" fill="#9c9a94"/><ellipse cx="159.6" cy="72.0" rx="2.4" ry="1.1" fill="#5a5854"/><ellipse cx="111.2" cy="37.7" rx="2.1" ry="1.3" fill="#6a6660"/><ellipse cx="34.4" cy="77.0" rx="1.2" ry="1.0" fill="#6a6660"/><ellipse cx="57.4" cy="43.7" rx="1.8" ry="1.2" fill="#4a4846"/><ellipse cx="35.3" cy="44.7" rx="2.2" ry="1.5" fill="#5a5854"/><ellipse cx="140.9" cy="56.6" rx="1.4" ry="1.2" fill="#6a6660"/><ellipse cx="5.1" cy="89.2" rx="2.7" ry="2.0" fill="#4a4846"/><ellipse cx="34.9" cy="63.2" rx="1.7" ry="1.0" fill="#4a4846"/><ellipse cx="81.0" cy="48.7" rx="1.6" ry="1.1" fill="#aaa8a2"/><ellipse cx="108.7" cy="97.9" rx="2.9" ry="2.6" fill="#8a8884"/><ellipse cx="132.7" cy="52.3" rx="1.4" ry="1.0" fill="#62605c"/><ellipse cx="140.8" cy="51.4" rx="1.3" ry="0.6" fill="#7a8a48"/><ellipse cx="116.8" cy="34.2" rx="1.8" ry="1.5" fill="#4a4846"/><ellipse cx="19.2" cy="43.4" rx="1.7" ry="1.0" fill="#5a5854"/><ellipse cx="94.4" cy="36.2" rx="1.2" ry="1.1" fill="#8a8884"/><ellipse cx="161.4" cy="43.3" rx="1.3" ry="1.2" fill="#9c9a94"/><ellipse cx="79.9" cy="68.8" rx="2.6" ry="1.4" fill="#7a8a48"/><ellipse cx="164.9" cy="68.2" rx="2.2" ry="1.8" fill="#aaa8a2"/><ellipse cx="23.2" cy="88.4" rx="2.4" ry="2.1" fill="#5a5854"/><ellipse cx="42.8" cy="91.8" rx="3.0" ry="1.7" fill="#5a5854"/><ellipse cx="16.3" cy="76.1" rx="1.9" ry="1.7" fill="#9c9a94"/><ellipse cx="21.0" cy="100.4" rx="1.1" ry="0.8" fill="#4a4846"/><ellipse cx="132.5" cy="107.4" rx="2.7" ry="2.0" fill="#62605c"/><ellipse cx="76.4" cy="85.8" rx="2.0" ry="1.7" fill="#6a6660"/><ellipse cx="38.1" cy="42.7" rx="2.2" ry="1.2" fill="#aaa8a2"/><ellipse cx="54.8" cy="58.0" rx="2.0" ry="1.2" fill="#4a4846"/><ellipse cx="158.4" cy="85.4" rx="2.2" ry="1.0" fill="#8a8884"/><ellipse cx="123.1" cy="43.9" rx="1.5" ry="1.3" fill="#4a4846"/><ellipse cx="71.5" cy="87.2" rx="2.1" ry="1.1" fill="#3c3a38"/><ellipse cx="123.5" cy="97.1" rx="1.1" ry="0.8" fill="#3c3a38"/><ellipse cx="43.5" cy="43.4" rx="2.6" ry="1.5" fill="#6a6660"/><ellipse cx="5.6" cy="64.1" rx="2.4" ry="1.3" fill="#7a8a48"/><ellipse cx="58.1" cy="86.0" rx="1.7" ry="1.4" fill="#8a8884"/><ellipse cx="162.8" cy="102.1" rx="2.4" ry="2.0" fill="#aaa8a2"/><ellipse cx="157.2" cy="49.9" rx="1.4" ry="0.6" fill="#aaa8a2"/><ellipse cx="25.9" cy="95.5" rx="2.7" ry="2.4" fill="#3c3a38"/><ellipse cx="63.8" cy="91.2" rx="1.6" ry="1.4" fill="#3c3a38"/><ellipse cx="67.8" cy="92.8" rx="1.5" ry="1.0" fill="#62605c"/><ellipse cx="129.1" cy="99.1" rx="2.3" ry="1.8" fill="#5a5854"/><ellipse cx="62.7" cy="72.7" rx="2.9" ry="2.1" fill="#62605c"/><ellipse cx="157.9" cy="48.3" rx="2.6" ry="1.5" fill="#4a4846"/><ellipse cx="93.1" cy="45.1" rx="1.8" ry="1.5" fill="#4a4846"/><ellipse cx="161.1" cy="46.6" rx="2.7" ry="1.6" fill="#7a8a48"/><ellipse cx="45.9" cy="35.3" rx="2.1" ry="1.2" fill="#aaa8a2"/><ellipse cx="127.7" cy="62.8" rx="2.5" ry="1.4" fill="#5a5854"/><ellipse cx="157.0" cy="45.4" rx="2.7" ry="1.8" fill="#8a8884"/><ellipse cx="3.9" cy="95.0" rx="1.9" ry="1.2" fill="#aaa8a2"/><ellipse cx="112.1" cy="26.3" rx="2.4" ry="2.1" fill="#7a8a48"/><ellipse cx="39.5" cy="111.4" rx="1.9" ry="1.1" fill="#6a6660"/><ellipse cx="152.8" cy="53.7" rx="1.8" ry="1.1" fill="#5a5854"/><ellipse cx="114.9" cy="98.1" rx="1.1" ry="0.8" fill="#aaa8a2"/><ellipse cx="126.3" cy="37.7" rx="2.9" ry="2.3" fill="#62605c"/><ellipse cx="152.9" cy="62.8" rx="2.1" ry="1.7" fill="#aaa8a2"/><ellipse cx="9.4" cy="100.9" rx="1.6" ry="1.2" fill="#4a4846"/><ellipse cx="21.0" cy="58.8" rx="1.5" ry="0.8" fill="#6a6660"/><ellipse cx="130.2" cy="97.7" rx="2.2" ry="1.8" fill="#6a6660"/><ellipse cx="57.5" cy="42.0" rx="1.5" ry="0.8" fill="#9c9a94"/><ellipse cx="19.6" cy="99.2" rx="2.4" ry="1.3" fill="#aaa8a2"/><ellipse cx="72.6" cy="32.7" rx="1.2" ry="1.0" fill="#62605c"/><ellipse cx="146.2" cy="67.0" rx="1.3" ry="0.8" fill="#9c9a94"/><ellipse cx="10.4" cy="77.7" rx="1.6" ry="1.3" fill="#62605c"/><ellipse cx="9.9" cy="53.9" rx="2.4" ry="2.0" fill="#4a4846"/><ellipse cx="92.6" cy="76.9" rx="2.5" ry="1.3" fill="#62605c"/><ellipse cx="51.1" cy="59.5" rx="1.9" ry="1.1" fill="#3c3a38"/><ellipse cx="125.7" cy="81.6" rx="1.3" ry="1.0" fill="#9c9a94"/><ellipse cx="79.7" cy="71.9" rx="2.6" ry="2.2" fill="#9c9a94"/><ellipse cx="71.5" cy="109.1" rx="1.3" ry="0.9" fill="#7a8a48"/><ellipse cx="134.6" cy="68.0" rx="1.4" ry="0.9" fill="#5a5854"/><ellipse cx="84.0" cy="83.0" rx="1.4" ry="0.6" fill="#3c3a38"/><ellipse cx="27.2" cy="86.9" rx="2.5" ry="1.7" fill="#7a8a48"/><ellipse cx="158.3" cy="37.5" rx="2.8" ry="2.2" fill="#3c3a38"/><ellipse cx="136.7" cy="31.6" rx="1.0" ry="0.4" fill="#7a8a48"/><ellipse cx="95.2" cy="46.5" rx="1.7" ry="1.1" fill="#62605c"/><ellipse cx="8.7" cy="51.6" rx="2.6" ry="1.1" fill="#6a6660"/><ellipse cx="27.5" cy="51.3" rx="2.3" ry="1.3" fill="#62605c"/><ellipse cx="24.2" cy="109.8" rx="2.7" ry="2.0" fill="#8a8884"/><ellipse cx="54.7" cy="47.5" rx="2.7" ry="1.9" fill="#7a8a48"/><ellipse cx="87.6" cy="62.8" rx="3.0" ry="2.2" fill="#3c3a38"/><ellipse cx="119.5" cy="80.3" rx="1.5" ry="0.8" fill="#5a5854"/><ellipse cx="25.0" cy="85.4" rx="2.3" ry="1.0" fill="#3c3a38"/><ellipse cx="110.9" cy="68.2" rx="1.7" ry="0.8" fill="#aaa8a2"/><ellipse cx="117.4" cy="106.7" rx="1.6" ry="0.9" fill="#3c3a38"/><ellipse cx="162.7" cy="66.1" rx="2.4" ry="1.4" fill="#6a6660"/><ellipse cx="69.7" cy="72.4" rx="2.5" ry="1.0" fill="#62605c"/><ellipse cx="56.5" cy="95.2" rx="2.9" ry="1.8" fill="#8a8884"/><ellipse cx="85.8" cy="86.3" rx="2.9" ry="2.4" fill="#aaa8a2"/><ellipse cx="82.5" cy="71.2" rx="2.1" ry="0.8" fill="#62605c"/><ellipse cx="115.5" cy="110.1" rx="2.9" ry="1.6" fill="#6a6660"/><ellipse cx="46.9" cy="64.9" rx="1.3" ry="0.9" fill="#6a6660"/><ellipse cx="31.3" cy="68.4" rx="1.5" ry="1.0" fill="#62605c"/><ellipse cx="46.1" cy="29.0" rx="2.9" ry="2.2" fill="#8a8884"/><ellipse cx="4.3" cy="60.1" rx="1.1" ry="0.8" fill="#8a8884"/><ellipse cx="74.9" cy="108.0" rx="1.9" ry="1.4" fill="#3c3a38"/><ellipse cx="156.7" cy="40.7" rx="1.7" ry="1.5" fill="#3c3a38"/><ellipse cx="62.6" cy="101.8" rx="1.2" ry="0.7" fill="#8a8884"/><ellipse cx="11.5" cy="44.6" rx="1.1" ry="0.7" fill="#4a4846"/><ellipse cx="42.6" cy="87.0" rx="2.5" ry="1.5" fill="#5a5854"/><ellipse cx="7.5" cy="74.6" rx="1.3" ry="0.6" fill="#62605c"/><ellipse cx="13.5" cy="31.5" rx="2.7" ry="1.5" fill="#3c3a38"/><ellipse cx="54.8" cy="96.6" rx="1.7" ry="1.2" fill="#5a5854"/><ellipse cx="146.0" cy="101.5" rx="2.7" ry="2.3" fill="#aaa8a2"/><ellipse cx="37.7" cy="66.5" rx="2.4" ry="1.2" fill="#62605c"/><ellipse cx="108.3" cy="28.0" rx="1.1" ry="0.8" fill="#7a8a48"/><ellipse cx="167.3" cy="78.0" rx="1.5" ry="0.8" fill="#5a5854"/><ellipse cx="76.4" cy="38.5" rx="2.1" ry="1.8" fill="#8a8884"/><ellipse cx="116.1" cy="59.7" rx="2.2" ry="1.0" fill="#3c3a38"/><ellipse cx="81.0" cy="71.5" rx="1.6" ry="1.1" fill="#6a6660"/><ellipse cx="85.0" cy="34.3" rx="2.1" ry="1.0" fill="#5a5854"/><ellipse cx="152.8" cy="96.1" rx="1.5" ry="1.0" fill="#4a4846"/><ellipse cx="113.9" cy="98.3" rx="2.6" ry="2.0" fill="#7a8a48"/><ellipse cx="3.2" cy="101.8" rx="2.3" ry="1.4" fill="#3c3a38"/><ellipse cx="136.1" cy="70.9" rx="1.7" ry="1.5" fill="#4a4846"/><ellipse cx="15.6" cy="80.1" rx="1.8" ry="1.0" fill="#3c3a38"/><ellipse cx="91.3" cy="106.8" rx="2.3" ry="1.8" fill="#4a4846"/><ellipse cx="93.9" cy="87.7" rx="2.7" ry="1.1" fill="#3c3a38"/><ellipse cx="143.7" cy="86.2" rx="2.0" ry="1.4" fill="#3c3a38"/><ellipse cx="43.2" cy="107.4" rx="1.9" ry="1.3" fill="#4a4846"/><ellipse cx="167.3" cy="105.6" rx="1.6" ry="1.1" fill="#3c3a38"/><ellipse cx="148.3" cy="54.1" rx="1.8" ry="0.7" fill="#6a6660"/><ellipse cx="5.4" cy="80.1" rx="3.0" ry="2.1" fill="#3c3a38"/><ellipse cx="36.7" cy="62.6" rx="2.8" ry="1.7" fill="#7a8a48"/><ellipse cx="124.6" cy="97.9" rx="1.2" ry="1.0" fill="#5a5854"/><ellipse cx="38.2" cy="33.2" rx="1.4" ry="0.6" fill="#62605c"/><ellipse cx="167.2" cy="67.8" rx="1.6" ry="0.8" fill="#8a8884"/><ellipse cx="91.8" cy="46.5" rx="2.8" ry="1.7" fill="#5a5854"/><ellipse cx="85.8" cy="47.8" rx="1.4" ry="0.6" fill="#7a8a48"/><ellipse cx="97.0" cy="34.4" rx="1.7" ry="1.1" fill="#9c9a94"/><ellipse cx="107.9" cy="57.2" rx="1.4" ry="0.8" fill="#5a5854"/><ellipse cx="108.3" cy="62.5" rx="2.7" ry="1.3" fill="#9c9a94"/><ellipse cx="93.9" cy="99.3" rx="2.1" ry="1.5" fill="#3c3a38"/><ellipse cx="34.1" cy="32.6" rx="2.6" ry="2.0" fill="#62605c"/><ellipse cx="56.9" cy="52.5" rx="2.7" ry="1.4" fill="#6a6660"/><ellipse cx="17.7" cy="37.1" rx="1.1" ry="0.5" fill="#aaa8a2"/><ellipse cx="0.7" cy="58.1" rx="1.1" ry="0.9" fill="#3c3a38"/><ellipse cx="48.0" cy="38.0" rx="1.2" ry="1.1" fill="#4a4846"/><ellipse cx="3.9" cy="66.7" rx="2.9" ry="2.2" fill="#3c3a38"/><ellipse cx="139.7" cy="107.9" rx="1.5" ry="1.3" fill="#3c3a38"/><ellipse cx="83.0" cy="37.7" rx="2.1" ry="1.3" fill="#4a4846"/><ellipse cx="41.3" cy="87.8" rx="2.5" ry="1.8" fill="#3c3a38"/><ellipse cx="133.5" cy="87.2" rx="2.0" ry="1.5" fill="#3c3a38"/><ellipse cx="89.3" cy="30.5" rx="1.5" ry="0.7" fill="#9c9a94"/><ellipse cx="34.5" cy="93.4" rx="2.0" ry="1.7" fill="#aaa8a2"/><ellipse cx="125.1" cy="35.5" rx="2.4" ry="1.0" fill="#7a8a48"/><ellipse cx="164.8" cy="63.5" rx="2.8" ry="2.1" fill="#6a6660"/><ellipse cx="29.7" cy="65.4" rx="1.5" ry="0.8" fill="#aaa8a2"/><ellipse cx="60.1" cy="92.6" rx="2.7" ry="2.0" fill="#3c3a38"/><ellipse cx="100.3" cy="37.7" rx="1.3" ry="0.9" fill="#aaa8a2"/><ellipse cx="1.7" cy="108.9" rx="1.8" ry="0.9" fill="#8a8884"/><ellipse cx="58.7" cy="69.9" rx="1.1" ry="0.7" fill="#8a8884"/><ellipse cx="158.0" cy="56.1" rx="2.7" ry="2.4" fill="#3c3a38"/><ellipse cx="124.2" cy="65.3" rx="1.3" ry="0.7" fill="#7a8a48"/><ellipse cx="68.5" cy="85.0" rx="2.4" ry="1.7" fill="#5a5854"/><ellipse cx="135.8" cy="108.1" rx="1.8" ry="0.8" fill="#62605c"/><ellipse cx="161.9" cy="81.1" rx="1.7" ry="1.1" fill="#9c9a94"/><ellipse cx="165.1" cy="62.2" rx="1.4" ry="0.7" fill="#4a4846"/><ellipse cx="149.1" cy="94.6" rx="1.1" ry="0.7" fill="#62605c"/><ellipse cx="125.9" cy="41.6" rx="1.2" ry="0.7" fill="#aaa8a2"/><ellipse cx="22.6" cy="42.1" rx="1.6" ry="1.1" fill="#3c3a38"/><ellipse cx="3.4" cy="49.5" rx="1.4" ry="0.8" fill="#62605c"/><ellipse cx="107.1" cy="28.5" rx="1.9" ry="1.4" fill="#aaa8a2"/><ellipse cx="133.3" cy="58.6" rx="2.0" ry="1.4" fill="#9c9a94"/><ellipse cx="15.7" cy="72.4" rx="1.6" ry="1.3" fill="#9c9a94"/><ellipse cx="144.4" cy="59.4" rx="1.1" ry="1.0" fill="#4a4846"/><ellipse cx="135.8" cy="59.0" rx="1.2" ry="1.0" fill="#4a4846"/><ellipse cx="31.3" cy="34.7" rx="1.0" ry="0.6" fill="#8a8884"/><ellipse cx="90.3" cy="56.1" rx="1.2" ry="0.8" fill="#aaa8a2"/><ellipse cx="115.6" cy="28.4" rx="1.4" ry="1.0" fill="#9c9a94"/><ellipse cx="162.6" cy="69.0" rx="2.5" ry="2.1" fill="#3c3a38"/><ellipse cx="68.3" cy="78.2" rx="2.9" ry="1.2" fill="#62605c"/><ellipse cx="58.6" cy="56.2" rx="2.8" ry="2.3" fill="#5a5854"/><ellipse cx="153.5" cy="61.2" rx="2.1" ry="1.1" fill="#5a5854"/><ellipse cx="31.0" cy="86.3" rx="3.0" ry="2.6" fill="#62605c"/><ellipse cx="72.9" cy="106.7" rx="2.7" ry="1.7" fill="#7a8a48"/><ellipse cx="22.7" cy="102.8" rx="1.5" ry="0.6" fill="#5a5854"/><ellipse cx="138.7" cy="51.5" rx="2.7" ry="1.7" fill="#aaa8a2"/><ellipse cx="119.9" cy="88.7" rx="1.8" ry="1.3" fill="#4a4846"/><ellipse cx="102.3" cy="87.1" rx="1.2" ry="0.8" fill="#6a6660"/><ellipse cx="156.7" cy="33.8" rx="2.7" ry="1.7" fill="#9c9a94"/><ellipse cx="54.7" cy="65.0" rx="3.0" ry="2.6" fill="#3c3a38"/><ellipse cx="162.0" cy="39.0" rx="1.4" ry="0.7" fill="#3c3a38"/><ellipse cx="108.6" cy="63.8" rx="1.0" ry="0.8" fill="#5a5854"/><ellipse cx="54.3" cy="66.6" rx="2.9" ry="1.9" fill="#3c3a38"/><ellipse cx="109.8" cy="46.8" rx="2.9" ry="2.4" fill="#8a8884"/><ellipse cx="20.0" cy="43.7" rx="1.2" ry="1.0" fill="#aaa8a2"/><ellipse cx="131.3" cy="88.7" rx="1.4" ry="0.7" fill="#aaa8a2"/><ellipse cx="2.3" cy="111.0" rx="2.0" ry="0.9" fill="#5a5854"/><ellipse cx="30.6" cy="111.7" rx="1.0" ry="0.5" fill="#5a5854"/><ellipse cx="111.4" cy="37.2" rx="1.7" ry="0.9" fill="#aaa8a2"/><ellipse cx="55.5" cy="103.3" rx="2.0" ry="1.2" fill="#6a6660"/><ellipse cx="126.6" cy="69.8" rx="1.2" ry="0.7" fill="#6a6660"/><ellipse cx="155.5" cy="28.0" rx="1.7" ry="1.3" fill="#aaa8a2"/><ellipse cx="80.9" cy="48.2" rx="1.3" ry="0.7" fill="#5a5854"/><ellipse cx="40.4" cy="82.1" rx="1.4" ry="0.6" fill="#5a5854"/><ellipse cx="110.1" cy="81.0" rx="1.9" ry="1.0" fill="#8a8884"/><ellipse cx="1.6" cy="70.9" rx="2.4" ry="1.8" fill="#9c9a94"/><ellipse cx="2.0" cy="66.2" rx="1.2" ry="0.8" fill="#3c3a38"/><ellipse cx="21.2" cy="46.6" rx="2.6" ry="2.1" fill="#4a4846"/><ellipse cx="129.9" cy="54.1" rx="1.1" ry="1.0" fill="#5a5854"/><ellipse cx="65.9" cy="82.7" rx="2.8" ry="1.8" fill="#4a4846"/><ellipse cx="118.6" cy="88.0" rx="1.4" ry="1.1" fill="#5a5854"/><ellipse cx="47.4" cy="105.7" rx="2.2" ry="1.2" fill="#5a5854"/><ellipse cx="154.4" cy="67.7" rx="1.9" ry="0.9" fill="#9c9a94"/><ellipse cx="79.5" cy="61.9" rx="2.5" ry="2.0" fill="#7a8a48"/><ellipse cx="159.8" cy="27.5" rx="2.0" ry="1.7" fill="#aaa8a2"/><ellipse cx="2.6" cy="83.0" rx="1.6" ry="0.8" fill="#9c9a94"/><ellipse cx="12.1" cy="74.8" rx="1.0" ry="0.8" fill="#3c3a38"/><ellipse cx="107.2" cy="63.6" rx="2.8" ry="1.4" fill="#62605c"/><ellipse cx="23.2" cy="62.6" rx="2.4" ry="1.9" fill="#62605c"/><ellipse cx="81.3" cy="42.2" rx="1.7" ry="0.9" fill="#aaa8a2"/><ellipse cx="22.5" cy="85.5" rx="1.9" ry="1.7" fill="#6a6660"/><ellipse cx="30.5" cy="73.8" rx="2.3" ry="1.4" fill="#7a8a48"/><ellipse cx="137.9" cy="47.0" rx="1.8" ry="1.4" fill="#8a8884"/><ellipse cx="147.8" cy="76.7" rx="1.1" ry="0.8" fill="#62605c"/><ellipse cx="19.7" cy="96.3" rx="1.3" ry="0.7" fill="#3c3a38"/><ellipse cx="83.0" cy="62.4" rx="2.8" ry="2.3" fill="#3c3a38"/><ellipse cx="142.1" cy="83.2" rx="2.3" ry="1.1" fill="#6a6660"/><ellipse cx="89.6" cy="74.2" rx="1.6" ry="1.2" fill="#8a8884"/><ellipse cx="83.3" cy="54.0" rx="1.3" ry="0.9" fill="#4a4846"/><ellipse cx="131.4" cy="94.9" rx="1.9" ry="1.2" fill="#5a5854"/><ellipse cx="104.9" cy="100.1" rx="1.1" ry="0.7" fill="#aaa8a2"/><ellipse cx="115.5" cy="60.8" rx="1.6" ry="1.2" fill="#8a8884"/><ellipse cx="101.4" cy="79.9" rx="2.2" ry="1.5" fill="#9c9a94"/><ellipse cx="12.7" cy="69.2" rx="2.9" ry="2.3" fill="#4a4846"/><ellipse cx="112.4" cy="40.7" rx="2.0" ry="1.8" fill="#8a8884"/><ellipse cx="4.0" cy="28.7" rx="1.1" ry="0.6" fill="#aaa8a2"/><ellipse cx="126.6" cy="95.4" rx="1.2" ry="0.7" fill="#5a5854"/><ellipse cx="56.7" cy="49.4" rx="1.3" ry="0.8" fill="#8a8884"/><ellipse cx="33.7" cy="110.1" rx="2.8" ry="1.3" fill="#8a8884"/><ellipse cx="86.7" cy="81.7" rx="2.1" ry="1.2" fill="#4a4846"/><ellipse cx="66.8" cy="26.3" rx="1.4" ry="0.7" fill="#9c9a94"/><ellipse cx="113.5" cy="97.3" rx="1.9" ry="0.8" fill="#4a4846"/><ellipse cx="89.8" cy="57.5" rx="1.9" ry="1.5" fill="#6a6660"/><ellipse cx="26.0" cy="48.8" rx="2.3" ry="1.5" fill="#62605c"/><ellipse cx="145.4" cy="49.0" rx="2.5" ry="1.2" fill="#8a8884"/><ellipse cx="38.7" cy="58.5" rx="2.3" ry="1.2" fill="#aaa8a2"/><ellipse cx="98.5" cy="79.5" rx="2.2" ry="1.1" fill="#4a4846"/><ellipse cx="59.1" cy="104.1" rx="1.7" ry="1.3" fill="#62605c"/><ellipse cx="146.8" cy="109.8" rx="2.2" ry="1.0" fill="#3c3a38"/><ellipse cx="36.6" cy="97.3" rx="1.4" ry="1.0" fill="#3c3a38"/><ellipse cx="53.0" cy="80.5" rx="2.6" ry="1.3" fill="#7a8a48"/><ellipse cx="123.3" cy="49.3" rx="2.7" ry="2.1" fill="#8a8884"/><ellipse cx="10.1" cy="79.7" rx="1.3" ry="0.7" fill="#aaa8a2"/><ellipse cx="74.0" cy="43.9" rx="1.7" ry="1.0" fill="#6a6660"/><ellipse cx="115.0" cy="62.9" rx="1.0" ry="0.7" fill="#62605c"/><ellipse cx="118.4" cy="90.1" rx="2.5" ry="1.4" fill="#6a6660"/><ellipse cx="77.7" cy="61.8" rx="1.1" ry="0.6" fill="#5a5854"/><ellipse cx="22.0" cy="67.0" rx="2.5" ry="1.3" fill="#5a5854"/><ellipse cx="94.5" cy="27.4" rx="2.8" ry="1.2" fill="#62605c"/><ellipse cx="146.8" cy="45.3" rx="2.3" ry="1.0" fill="#6a6660"/><ellipse cx="103.5" cy="41.8" rx="1.5" ry="0.8" fill="#5a5854"/><ellipse cx="39.1" cy="76.2" rx="2.7" ry="1.2" fill="#6a6660"/><ellipse cx="37.8" cy="91.6" rx="2.7" ry="1.6" fill="#7a8a48"/><ellipse cx="75.1" cy="65.9" rx="1.9" ry="1.0" fill="#3c3a38"/><ellipse cx="122.5" cy="82.6" rx="1.5" ry="0.9" fill="#8a8884"/><ellipse cx="51.3" cy="74.5" rx="1.6" ry="1.1" fill="#9c9a94"/><ellipse cx="44.6" cy="87.9" rx="3.0" ry="2.2" fill="#7a8a48"/><ellipse cx="75.6" cy="95.1" rx="2.2" ry="1.5" fill="#aaa8a2"/><ellipse cx="146.6" cy="26.9" rx="2.7" ry="1.4" fill="#9c9a94"/><ellipse cx="5.0" cy="87.3" rx="1.9" ry="1.6" fill="#aaa8a2"/><ellipse cx="71.5" cy="39.1" rx="1.8" ry="0.8" fill="#aaa8a2"/><ellipse cx="90.3" cy="104.7" rx="1.5" ry="1.0" fill="#9c9a94"/><ellipse cx="0.2" cy="63.1" rx="1.1" ry="0.6" fill="#5a5854"/><ellipse cx="126.4" cy="35.9" rx="1.6" ry="1.2" fill="#62605c"/><ellipse cx="22.4" cy="99.9" rx="2.7" ry="1.2" fill="#aaa8a2"/><ellipse cx="49.8" cy="96.7" rx="1.8" ry="1.5" fill="#6a6660"/><ellipse cx="43.8" cy="68.3" rx="2.1" ry="1.3" fill="#9c9a94"/><ellipse cx="61.5" cy="30.3" rx="1.5" ry="0.8" fill="#7a8a48"/><ellipse cx="106.0" cy="104.2" rx="1.3" ry="1.1" fill="#9c9a94"/><ellipse cx="125.8" cy="67.7" rx="2.1" ry="0.8" fill="#9c9a94"/><ellipse cx="52.9" cy="43.0" rx="2.0" ry="1.0" fill="#aaa8a2"/><ellipse cx="53.4" cy="75.0" rx="1.9" ry="1.6" fill="#aaa8a2"/><ellipse cx="150.1" cy="100.7" rx="2.5" ry="2.0" fill="#4a4846"/><ellipse cx="110.8" cy="69.7" rx="2.1" ry="1.8" fill="#8a8884"/><ellipse cx="48.9" cy="33.5" rx="2.4" ry="1.8" fill="#62605c"/><ellipse cx="26.3" cy="97.9" rx="1.4" ry="1.2" fill="#aaa8a2"/><ellipse cx="109.4" cy="106.6" rx="2.8" ry="1.8" fill="#8a8884"/><ellipse cx="23.4" cy="103.1" rx="2.9" ry="1.3" fill="#4a4846"/><ellipse cx="77.4" cy="61.5" rx="2.7" ry="1.1" fill="#8a8884"/><ellipse cx="165.9" cy="47.2" rx="2.1" ry="1.6" fill="#62605c"/><ellipse cx="1.7" cy="35.5" rx="1.7" ry="1.2" fill="#aaa8a2"/><ellipse cx="151.2" cy="85.4" rx="1.5" ry="1.2" fill="#4a4846"/><ellipse cx="45.7" cy="49.2" rx="2.9" ry="1.9" fill="#aaa8a2"/><ellipse cx="66.9" cy="31.4" rx="2.5" ry="1.9" fill="#5a5854"/><ellipse cx="102.0" cy="55.9" rx="1.6" ry="1.1" fill="#7a8a48"/><ellipse cx="95.8" cy="69.8" rx="2.3" ry="1.4" fill="#6a6660"/><ellipse cx="128.9" cy="33.6" rx="1.0" ry="0.6" fill="#9c9a94"/><ellipse cx="86.6" cy="76.6" rx="1.2" ry="0.5" fill="#4a4846"/><ellipse cx="59.1" cy="81.8" rx="1.1" ry="0.8" fill="#4a4846"/><ellipse cx="84.3" cy="49.3" rx="2.1" ry="1.2" fill="#5a5854"/><ellipse cx="151.0" cy="95.4" rx="1.3" ry="1.1" fill="#5a5854"/><ellipse cx="166.5" cy="88.0" rx="1.6" ry="1.4" fill="#6a6660"/><ellipse cx="165.5" cy="57.3" rx="2.2" ry="1.7" fill="#3c3a38"/><ellipse cx="96.8" cy="49.4" rx="1.4" ry="0.6" fill="#9c9a94"/><ellipse cx="11.6" cy="94.7" rx="2.9" ry="2.1" fill="#6a6660"/><ellipse cx="160.3" cy="110.1" rx="2.4" ry="1.0" fill="#8a8884"/><ellipse cx="58.8" cy="105.3" rx="1.8" ry="0.9" fill="#7a8a48"/><ellipse cx="158.2" cy="68.6" rx="2.0" ry="1.6" fill="#9c9a94"/><ellipse cx="117.6" cy="55.4" rx="1.1" ry="0.6" fill="#62605c"/><ellipse cx="67.6" cy="31.6" rx="1.9" ry="0.8" fill="#7a8a48"/><ellipse cx="102.7" cy="45.7" rx="1.9" ry="0.8" fill="#6a6660"/><ellipse cx="82.7" cy="99.5" rx="2.3" ry="1.4" fill="#5a5854"/><ellipse cx="151.4" cy="36.1" rx="3.0" ry="2.5" fill="#62605c"/><ellipse cx="89.9" cy="66.6" rx="2.2" ry="1.0" fill="#8a8884"/><ellipse cx="22.6" cy="34.8" rx="2.0" ry="0.9" fill="#8a8884"/><ellipse cx="139.4" cy="28.8" rx="2.7" ry="1.7" fill="#6a6660"/><ellipse cx="129.4" cy="47.3" rx="2.3" ry="1.2" fill="#6a6660"/><ellipse cx="8.7" cy="102.6" rx="2.6" ry="1.5" fill="#5a5854"/><ellipse cx="105.0" cy="67.9" rx="2.8" ry="1.8" fill="#6a6660"/><ellipse cx="163.1" cy="89.0" rx="1.8" ry="1.3" fill="#9c9a94"/><ellipse cx="81.9" cy="32.9" rx="2.5" ry="1.3" fill="#8a8884"/><ellipse cx="50.9" cy="87.7" rx="2.8" ry="2.2" fill="#6a6660"/><ellipse cx="136.1" cy="84.7" rx="1.0" ry="0.4" fill="#9c9a94"/><ellipse cx="92.3" cy="56.9" rx="1.8" ry="0.9" fill="#7a8a48"/><ellipse cx="0.3" cy="68.6" rx="1.5" ry="0.8" fill="#6a6660"/><ellipse cx="66.2" cy="49.1" rx="1.5" ry="0.8" fill="#3c3a38"/><ellipse cx="50.2" cy="63.9" rx="2.8" ry="2.5" fill="#9c9a94"/><ellipse cx="161.4" cy="53.8" rx="1.7" ry="0.9" fill="#8a8884"/><ellipse cx="26.7" cy="67.9" rx="2.0" ry="1.1" fill="#aaa8a2"/><ellipse cx="25.5" cy="36.9" rx="2.3" ry="1.2" fill="#5a5854"/><ellipse cx="61.4" cy="51.2" rx="1.2" ry="0.6" fill="#5a5854"/><ellipse cx="58.7" cy="84.1" rx="2.9" ry="2.2" fill="#62605c"/><ellipse cx="80.9" cy="29.7" rx="2.8" ry="1.2" fill="#5a5854"/><ellipse cx="56.3" cy="77.2" rx="2.4" ry="1.7" fill="#8a8884"/><ellipse cx="146.9" cy="103.1" rx="1.8" ry="1.4" fill="#5a5854"/><ellipse cx="149.9" cy="78.4" rx="2.8" ry="1.3" fill="#62605c"/><ellipse cx="163.6" cy="77.9" rx="1.7" ry="0.7" fill="#3c3a38"/><ellipse cx="93.5" cy="85.0" rx="1.3" ry="0.7" fill="#8a8884"/><ellipse cx="52.8" cy="77.2" rx="1.1" ry="1.0" fill="#7a8a48"/><ellipse cx="30.2" cy="40.0" rx="1.2" ry="0.8" fill="#62605c"/><ellipse cx="44.4" cy="97.1" rx="1.4" ry="1.0" fill="#4a4846"/><ellipse cx="54.2" cy="75.5" rx="2.1" ry="1.7" fill="#7a8a48"/><ellipse cx="30.7" cy="85.9" rx="2.4" ry="1.7" fill="#62605c"/><ellipse cx="34.0" cy="50.6" rx="1.3" ry="0.5" fill="#9c9a94"/><ellipse cx="165.1" cy="41.4" rx="2.7" ry="2.4" fill="#62605c"/><ellipse cx="52.8" cy="69.3" rx="2.0" ry="1.0" fill="#4a4846"/><ellipse cx="131.7" cy="104.9" rx="1.8" ry="1.6" fill="#aaa8a2"/><ellipse cx="146.5" cy="44.9" rx="2.2" ry="1.0" fill="#3c3a38"/><ellipse cx="139.3" cy="57.5" rx="1.1" ry="0.9" fill="#3c3a38"/><ellipse cx="119.2" cy="64.4" rx="2.0" ry="1.3" fill="#6a6660"/><ellipse cx="56.6" cy="42.4" rx="2.9" ry="1.8" fill="#8a8884"/><ellipse cx="123.0" cy="71.9" rx="1.7" ry="0.8" fill="#8a8884"/><ellipse cx="120.2" cy="108.8" rx="2.3" ry="1.0" fill="#5a5854"/><ellipse cx="143.7" cy="91.0" rx="1.0" ry="0.5" fill="#aaa8a2"/><ellipse cx="93.2" cy="50.6" rx="1.5" ry="1.0" fill="#6a6660"/><ellipse cx="138.9" cy="77.6" rx="2.2" ry="1.5" fill="#3c3a38"/><ellipse cx="156.2" cy="92.9" rx="2.2" ry="1.5" fill="#3c3a38"/><ellipse cx="61.0" cy="68.7" rx="1.8" ry="1.1" fill="#9c9a94"/><ellipse cx="104.8" cy="78.4" rx="1.5" ry="0.9" fill="#3c3a38"/><ellipse cx="100.1" cy="91.8" rx="1.7" ry="1.0" fill="#3c3a38"/><ellipse cx="67.1" cy="52.9" rx="2.3" ry="1.5" fill="#6a6660"/><ellipse cx="159.5" cy="88.1" rx="2.5" ry="1.7" fill="#8a8884"/><ellipse cx="58.9" cy="45.6" rx="1.2" ry="0.8" fill="#4a4846"/><ellipse cx="103.7" cy="109.5" rx="1.5" ry="0.9" fill="#aaa8a2"/><ellipse cx="134.1" cy="31.5" rx="2.8" ry="2.0" fill="#62605c"/><ellipse cx="120.9" cy="108.8" rx="1.9" ry="1.2" fill="#3c3a38"/><ellipse cx="144.2" cy="43.8" rx="1.8" ry="0.9" fill="#4a4846"/><ellipse cx="0.3" cy="76.0" rx="2.3" ry="1.3" fill="#5a5854"/><ellipse cx="71.0" cy="30.6" rx="1.6" ry="0.9" fill="#4a4846"/><ellipse cx="19.7" cy="63.9" rx="1.1" ry="0.9" fill="#4a4846"/><ellipse cx="51.0" cy="109.9" rx="2.0" ry="1.0" fill="#7a8a48"/><ellipse cx="19.3" cy="102.3" rx="1.1" ry="0.5" fill="#3c3a38"/><ellipse cx="80.6" cy="80.3" rx="2.7" ry="2.2" fill="#3c3a38"/><ellipse cx="154.3" cy="28.2" rx="1.3" ry="0.7" fill="#7a8a48"/><ellipse cx="57.3" cy="52.5" rx="1.4" ry="1.2" fill="#8a8884"/><ellipse cx="159.2" cy="73.6" rx="2.6" ry="2.1" fill="#8a8884"/><ellipse cx="40.7" cy="95.8" rx="2.2" ry="1.6" fill="#aaa8a2"/><ellipse cx="164.8" cy="61.7" rx="1.7" ry="0.8" fill="#8a8884"/><ellipse cx="21.9" cy="52.5" rx="1.5" ry="1.1" fill="#aaa8a2"/><ellipse cx="109.7" cy="109.2" rx="1.5" ry="0.8" fill="#aaa8a2"/><ellipse cx="101.8" cy="40.5" rx="1.0" ry="0.6" fill="#7a8a48"/><ellipse cx="122.9" cy="73.3" rx="1.9" ry="0.8" fill="#5a5854"/><ellipse cx="119.5" cy="103.9" rx="2.1" ry="1.7" fill="#7a8a48"/><ellipse cx="84.1" cy="90.5" rx="1.6" ry="0.9" fill="#7a8a48"/><ellipse cx="41.9" cy="63.9" rx="2.6" ry="1.8" fill="#8a8884"/><ellipse cx="64.2" cy="74.8" rx="1.3" ry="0.5" fill="#aaa8a2"/><ellipse cx="38.5" cy="35.5" rx="1.9" ry="0.8" fill="#4a4846"/><ellipse cx="56.7" cy="97.3" rx="1.4" ry="0.7" fill="#3c3a38"/><ellipse cx="44.8" cy="69.7" rx="2.7" ry="1.6" fill="#aaa8a2"/><ellipse cx="160.9" cy="79.3" rx="2.0" ry="1.2" fill="#4a4846"/><ellipse cx="163.6" cy="105.8" rx="2.1" ry="1.1" fill="#4a4846"/><ellipse cx="89.1" cy="92.8" rx="1.4" ry="0.9" fill="#8a8884"/><ellipse cx="47.4" cy="88.6" rx="1.4" ry="0.8" fill="#aaa8a2"/><ellipse cx="44.7" cy="53.5" rx="1.9" ry="1.4" fill="#4a4846"/><ellipse cx="127.6" cy="37.9" rx="1.4" ry="0.6" fill="#6a6660"/><ellipse cx="67.5" cy="77.4" rx="2.3" ry="1.1" fill="#6a6660"/><ellipse cx="94.3" cy="77.3" rx="2.2" ry="1.6" fill="#aaa8a2"/><ellipse cx="128.9" cy="88.8" rx="2.4" ry="1.1" fill="#8a8884"/><ellipse cx="46.4" cy="28.3" rx="2.2" ry="1.1" fill="#5a5854"/><ellipse cx="136.3" cy="105.0" rx="2.8" ry="1.8" fill="#3c3a38"/><ellipse cx="50.6" cy="56.5" rx="2.8" ry="1.8" fill="#3c3a38"/><ellipse cx="106.0" cy="75.2" rx="1.5" ry="0.7" fill="#9c9a94"/><ellipse cx="17.7" cy="100.9" rx="2.8" ry="1.8" fill="#4a4846"/><ellipse cx="7.4" cy="40.9" rx="1.9" ry="1.2" fill="#4a4846"/><ellipse cx="64.4" cy="75.1" rx="1.8" ry="1.0" fill="#8a8884"/><ellipse cx="62.2" cy="82.9" rx="2.3" ry="1.1" fill="#3c3a38"/><ellipse cx="55.4" cy="88.5" rx="1.9" ry="1.2" fill="#62605c"/><ellipse cx="11.1" cy="78.3" rx="1.7" ry="0.9" fill="#5a5854"/><ellipse cx="132.2" cy="94.0" rx="2.0" ry="1.6" fill="#8a8884"/><ellipse cx="159.5" cy="27.8" rx="1.3" ry="0.8" fill="#4a4846"/><ellipse cx="76.5" cy="83.9" rx="2.0" ry="1.4" fill="#3c3a38"/><ellipse cx="139.5" cy="65.8" rx="1.1" ry="1.0" fill="#3c3a38"/><ellipse cx="25.3" cy="49.7" rx="2.6" ry="2.4" fill="#62605c"/><ellipse cx="54.4" cy="57.1" rx="2.9" ry="2.3" fill="#6a6660"/><ellipse cx="137.0" cy="48.0" rx="1.1" ry="0.6" fill="#8a8884"/><ellipse cx="61.1" cy="92.6" rx="1.1" ry="0.7" fill="#aaa8a2"/><ellipse cx="0.4" cy="74.5" rx="1.6" ry="1.4" fill="#3c3a38"/><ellipse cx="118.4" cy="28.9" rx="2.7" ry="1.5" fill="#62605c"/><ellipse cx="76.5" cy="84.4" rx="2.8" ry="1.7" fill="#5a5854"/><ellipse cx="12.2" cy="98.0" rx="2.8" ry="1.3" fill="#4a4846"/><ellipse cx="53.5" cy="110.6" rx="1.1" ry="0.8" fill="#9c9a94"/><ellipse cx="129.7" cy="64.0" rx="2.5" ry="2.1" fill="#6a6660"/><ellipse cx="103.6" cy="69.0" rx="2.5" ry="1.0" fill="#5a5854"/><ellipse cx="24.0" cy="95.2" rx="2.8" ry="1.4" fill="#3c3a38"/><ellipse cx="47.8" cy="34.3" rx="2.0" ry="1.2" fill="#aaa8a2"/><ellipse cx="143.5" cy="35.1" rx="2.7" ry="1.4" fill="#4a4846"/><ellipse cx="47.3" cy="98.8" rx="2.5" ry="1.3" fill="#62605c"/><ellipse cx="65.3" cy="56.9" rx="1.1" ry="1.0" fill="#7a8a48"/><ellipse cx="144.6" cy="59.6" rx="1.7" ry="1.1" fill="#6a6660"/><ellipse cx="84.4" cy="30.5" rx="1.8" ry="1.3" fill="#aaa8a2"/><ellipse cx="99.4" cy="78.3" rx="2.2" ry="1.9" fill="#9c9a94"/><ellipse cx="63.2" cy="47.0" rx="1.9" ry="1.5" fill="#7a8a48"/><ellipse cx="116.2" cy="84.9" rx="1.8" ry="1.5" fill="#6a6660"/><ellipse cx="45.3" cy="63.6" rx="2.0" ry="1.0" fill="#6a6660"/><ellipse cx="111.8" cy="61.4" rx="1.8" ry="1.1" fill="#8a8884"/><ellipse cx="92.9" cy="82.3" rx="2.3" ry="1.8" fill="#aaa8a2"/><ellipse cx="108.6" cy="90.7" rx="2.0" ry="0.8" fill="#9c9a94"/><ellipse cx="14.4" cy="88.1" rx="1.6" ry="1.2" fill="#5a5854"/><ellipse cx="82.2" cy="46.4" rx="2.5" ry="2.2" fill="#6a6660"/><ellipse cx="58.3" cy="83.2" rx="2.5" ry="1.7" fill="#5a5854"/><ellipse cx="47.4" cy="84.2" rx="1.2" ry="0.8" fill="#8a8884"/><ellipse cx="66.2" cy="94.0" rx="1.5" ry="0.9" fill="#5a5854"/><ellipse cx="80.1" cy="28.9" rx="1.0" ry="0.9" fill="#aaa8a2"/><ellipse cx="23.6" cy="48.5" rx="1.1" ry="1.0" fill="#8a8884"/><ellipse cx="118.9" cy="102.6" rx="2.0" ry="1.6" fill="#7a8a48"/><ellipse cx="106.8" cy="44.4" rx="2.8" ry="2.2" fill="#aaa8a2"/><ellipse cx="134.3" cy="47.9" rx="1.0" ry="0.9" fill="#62605c"/><ellipse cx="140.5" cy="36.0" rx="1.4" ry="0.7" fill="#9c9a94"/><ellipse cx="2.7" cy="99.2" rx="2.8" ry="1.4" fill="#62605c"/><ellipse cx="21.7" cy="111.7" rx="1.4" ry="0.8" fill="#5a5854"/></g>
<path d="M97,42 Q99,41 100,43 L103,46 L103,56 L94,56 L94,46Z" fill="#262630"/>
<circle cx="97.5" cy="43.5" r="1.8" fill="#d8b8a0"/>
<rect x="95" y="56" width="6" height="7" fill="#2c4070"/>
<rect x="109" y="57" width="4" height="7" fill="#1a1a1a"/>
<rect x="76" y="70" width="6" height="6" fill="#3a3028"/></svg>
<svg style="left:150px;top:140px" width="34" height="9" viewBox="0 0 34 9"><rect x="0" y="0" width="17" height="9" fill="#6a6a9c"/><rect x="21" y="0" width="13" height="9" fill="#6a6a9c"/><text x="8.5" y="7.6" font-family="Liberation Sans" font-weight="bold" font-size="7.5" fill="#fff" text-anchor="middle" textLength="13" lengthAdjust="spacingAndGlyphs">EXIF</text><text x="27.5" y="7.6" font-family="Liberation Sans" font-weight="bold" font-size="7.5" fill="#fff" text-anchor="middle" textLength="10" lengthAdjust="spacingAndGlyphs">ICC</text></svg>
<svg style="left:336px;top:140px" width="34" height="9" viewBox="0 0 34 9"><rect x="0" y="0" width="17" height="9" fill="#6a6a9c"/><rect x="21" y="0" width="13" height="9" fill="#6a6a9c"/><text x="8.5" y="7.6" font-family="Liberation Sans" font-weight="bold" font-size="7.5" fill="#fff" text-anchor="middle" textLength="13" lengthAdjust="spacingAndGlyphs">EXIF</text><text x="27.5" y="7.6" font-family="Liberation Sans" font-weight="bold" font-size="7.5" fill="#fff" text-anchor="middle" textLength="10" lengthAdjust="spacingAndGlyphs">ICC</text></svg>
<svg style="left:522px;top:140px" width="34" height="9" viewBox="0 0 34 9"><rect x="0" y="0" width="17" height="9" fill="#6a6a9c"/><rect x="21" y="0" width="13" height="9" fill="#6a6a9c"/><text x="8.5" y="7.6" font-family="Liberation Sans" font-weight="bold" font-size="7.5" fill="#fff" text-anchor="middle" textLength="13" lengthAdjust="spacingAndGlyphs">EXIF</text><text x="27.5" y="7.6" font-family="Liberation Sans" font-weight="bold" font-size="7.5" fill="#fff" text-anchor="middle" textLength="10" lengthAdjust="spacingAndGlyphs">ICC</text></svg>
<div class="a" style="left:8px;top:153px;width:178px;height:15px;background:#ecebcc;"></div>
<div class="a" style="left:194px;top:153px;width:178px;height:15px;background:#efefef;"></div>
<div class="a" style="left:380px;top:153px;width:178px;height:15px;background:#ecebcc;"></div>
<div class="t" id="m42" style="left:46px;top:153px;letter-spacing:-0.421px;">IMG_6821_large.jpg</div>
<div class="t" id="m43" style="left:232px;top:153px;letter-spacing:-0.421px;">IMG_6829_large.jpg</div>
<div class="t" id="m44" style="left:418px;top:153px;letter-spacing:-0.421px;">IMG_6832_large.jpg</div>
<div class="a" style="left:43px;top:179px;width:107px;height:30px;box-shadow:2px 2px 3px 1px rgba(0,0,0,0.45)"></div>
<div class="a" style="left:43px;top:179px;width:107px;height:30px;background:#c6dcf4;"></div>
<div class="a" style="left:235px;top:179px;width:95px;height:30px;box-shadow:2px 2px 3px 1px rgba(0,0,0,0.45)"></div>
<div class="a" style="left:235px;top:179px;width:95px;height:30px;background:#c6dcf4;"></div>
</div>
<div class="a" style="left:941px;top:87px;width:17px;height:192px;background:linear-gradient(90deg,#e3e3e3,#eeeeee 3px,#f0f0f0 10px,#e8e8e8);"></div>
<svg style="left:945px;top:94px" width="8" height="5" viewBox="0 0 8 5"><path d="M0,4.5 L4,0.5 L8,4.5Z" fill="#3c3c3c"/></svg>
<svg style="left:945px;top:268px" width="8" height="5" viewBox="0 0 8 5"><path d="M0,0.5 L4,4.5 L8,0.5Z" fill="#3c3c3c"/></svg>
<div class="a" style="left:941px;top:105px;width:15px;height:42px;border:1px solid #979797;border-radius:2px;background:linear-gradient(90deg,#f3f3f3,#e8e8e8 45%,#d6d6d6 55%,#cfcfcf);box-shadow:inset 1px 1px 0 #fff"></div>
<div class="a" style="left:946px;top:122px;width:7px;height:2px;background:linear-gradient(#464646 0 1px,#fafafa 1px);"></div>
<div class="a" style="left:946px;top:125px;width:7px;height:2px;background:linear-gradient(#464646 0 1px,#fafafa 1px);"></div>
<div class="a" style="left:946px;top:128px;width:7px;height:2px;background:linear-gradient(#464646 0 1px,#fafafa 1px);"></div>
<div class="a" style="left:941px;top:313px;width:17px;height:255px;background:linear-gradient(90deg,#e3e3e3,#eeeeee 3px,#f0f0f0 10px,#e8e8e8);"></div>
<svg style="left:945px;top:320px" width="8" height="5" viewBox="0 0 8 5"><path d="M0,4.5 L4,0.5 L8,4.5Z" fill="#3c3c3c"/></svg>
<svg style="left:945px;top:557px" width="8" height="5" viewBox="0 0 8 5"><path d="M0,0.5 L4,4.5 L8,0.5Z" fill="#3c3c3c"/></svg>
<div class="a" style="left:941px;top:331px;width:15px;height:44px;border:1px solid #979797;border-radius:2px;background:linear-gradient(90deg,#f3f3f3,#e8e8e8 45%,#d6d6d6 55%,#cfcfcf);box-shadow:inset 1px 1px 0 #fff"></div>
<div class="a" style="left:946px;top:349px;width:7px;height:2px;background:linear-gradient(#464646 0 1px,#fafafa 1px);"></div>
<div class="a" style="left:946px;top:352px;width:7px;height:2px;background:linear-gradient(#464646 0 1px,#fafafa 1px);"></div>
<div class="a" style="left:946px;top:355px;width:7px;height:2px;background:linear-gradient(#464646 0 1px,#fafafa 1px);"></div>
<div class="a" style="left:300px;top:300px;width:6px;height:31px;background:#c9dcf7"></div>
<div class="a" style="left:301px;top:303px;width:1px;height:1px;background:#7a8aa0;"></div>
<div class="a" style="left:302px;top:304px;width:1px;height:1px;background:#ffffff;"></div>
<div class="a" style="left:303px;top:306px;width:1px;height:1px;background:#7a8aa0;"></div>
<div class="a" style="left:304px;top:307px;width:1px;height:1px;background:#ffffff;"></div>
<div class="a" style="left:301px;top:309px;width:1px;height:1px;background:#7a8aa0;"></div>
<div class="a" style="left:302px;top:310px;width:1px;height:1px;background:#ffffff;"></div>
<div class="a" style="left:301px;top:321px;width:1px;height:1px;background:#7a8aa0;"></div>
<div class="a" style="left:302px;top:322px;width:1px;height:1px;background:#ffffff;"></div>
<div class="a" style="left:303px;top:324px;width:1px;height:1px;background:#7a8aa0;"></div>
<div class="a" style="left:304px;top:325px;width:1px;height:1px;background:#ffffff;"></div>
<div class="a" style="left:301px;top:327px;width:1px;height:1px;background:#7a8aa0;"></div>
<div class="a" style="left:302px;top:328px;width:1px;height:1px;background:#ffffff;"></div>
<svg style="left:301px;top:311px" width="4" height="8" viewBox="0 0 4 8"><path d="M4,0 L0,4 L4,8Z" fill="#3a5078"/></svg>
<div class="a" style="left:307px;top:414px;width:6px;height:31px;background:#c9dcf7"></div>
<div class="a" style="left:308px;top:417px;width:1px;height:1px;background:#7a8aa0;"></div>
<div class="a" style="left:309px;top:418px;width:1px;height:1px;background:#ffffff;"></div>
<div class="a" style="left:310px;top:420px;width:1px;height:1px;background:#7a8aa0;"></div>
<div class="a" style="left:311px;top:421px;width:1px;height:1px;background:#ffffff;"></div>
<div class="a" style="left:308px;top:423px;width:1px;height:1px;background:#7a8aa0;"></div>
<div class="a" style="left:309px;top:424px;width:1px;height:1px;background:#ffffff;"></div>
<div class="a" style="left:308px;top:435px;width:1px;height:1px;background:#7a8aa0;"></div>
<div class="a" style="left:309px;top:436px;width:1px;height:1px;background:#ffffff;"></div>
<div class="a" style="left:310px;top:438px;width:1px;height:1px;background:#7a8aa0;"></div>
<div class="a" style="left:311px;top:439px;width:1px;height:1px;background:#ffffff;"></div>
<div class="a" style="left:308px;top:441px;width:1px;height:1px;background:#7a8aa0;"></div>
<div class="a" style="left:309px;top:442px;width:1px;height:1px;background:#ffffff;"></div>
<svg style="left:308px;top:425px" width="4" height="8" viewBox="0 0 4 8"><path d="M0,0 L4,4 L0,8Z" fill="#3a5078"/></svg>
<div class="a" style="left:618px;top:282px;width:31px;height:6px;background:#c9dcf7"></div>
<div class="a" style="left:620px;top:283px;width:1px;height:1px;background:#7a8aa0;"></div>
<div class="a" style="left:621px;top:284px;width:1px;height:1px;background:#fff;"></div>
<div class="a" style="left:623px;top:285px;width:1px;height:1px;background:#7a8aa0;"></div>
<div class="a" style="left:624px;top:286px;width:1px;height:1px;background:#fff;"></div>
<div class="a" style="left:626px;top:283px;width:1px;height:1px;background:#7a8aa0;"></div>
<div class="a" style="left:627px;top:284px;width:1px;height:1px;background:#fff;"></div>
<div class="a" style="left:639px;top:285px;width:1px;height:1px;background:#7a8aa0;"></div>
<div class="a" style="left:640px;top:286px;width:1px;height:1px;background:#fff;"></div>
<div class="a" style="left:642px;top:283px;width:1px;height:1px;background:#7a8aa0;"></div>
<div class="a" style="left:643px;top:284px;width:1px;height:1px;background:#fff;"></div>
<div class="a" style="left:645px;top:285px;width:1px;height:1px;background:#7a8aa0;"></div>
<div class="a" style="left:646px;top:286px;width:1px;height:1px;background:#fff;"></div>
<svg style="left:629px;top:283px" width="8" height="4" viewBox="0 0 8 4"><path d="M0,0 L8,0 L4,4Z" fill="#3a5078"/></svg>
<div class="a" style="left:270px;top:572px;width:1px;height:19px;background:#d5d2d2;"></div>
<div class="a" style="left:382px;top:572px;width:1px;height:19px;background:#d5d2d2;"></div>
<div class="a" style="left:494px;top:572px;width:1px;height:19px;background:#d5d2d2;"></div>
<div class="a" style="left:585px;top:572px;width:1px;height:19px;background:#d5d2d2;"></div>
<div class="a" style="left:638px;top:572px;width:1px;height:19px;background:#d5d2d2;"></div>
<div class="a" style="left:663px;top:572px;width:1px;height:19px;background:#d5d2d2;"></div>
<div class="a" style="left:943px;top:572px;width:1px;height:19px;background:#d5d2d2;"></div>
<div class="a" style="left:958px;top:583px;width:1px;height:1px;background:#8a8a8a;"></div>
<div class="a" style="left:959px;top:584px;width:1px;height:1px;background:#fff;"></div>
<div class="a" style="left:958px;top:587px;width:1px;height:1px;background:#8a8a8a;"></div>
<div class="a" style="left:959px;top:588px;width:1px;height:1px;background:#fff;"></div>
<div class="a" style="left:954px;top:587px;width:1px;height:1px;background:#8a8a8a;"></div>
<div class="a" style="left:955px;top:588px;width:1px;height:1px;background:#fff;"></div>
<div class="a" style="left:958px;top:591px;width:1px;height:1px;background:#8a8a8a;"></div>
<div class="a" style="left:959px;top:592px;width:1px;height:1px;background:#fff;"></div>
<div class="a" style="left:954px;top:591px;width:1px;height:1px;background:#8a8a8a;"></div>
<div class="a" style="left:955px;top:592px;width:1px;height:1px;background:#fff;"></div>
<div class="a" style="left:950px;top:591px;width:1px;height:1px;background:#8a8a8a;"></div>
<div class="a" style="left:951px;top:592px;width:1px;height:1px;background:#fff;"></div>
<svg style="left:0;top:0;pointer-events:none" width="960" height="593" viewBox="0 0 960 593"><defs>
<linearGradient id="gOr" x1="0" y1="0" x2="0" y2="1"><stop offset="0" stop-color="#ffcc10"/><stop offset="1" stop-color="#ee8a00"/></linearGradient>
<linearGradient id="gGrn" x1="0" y1="0" x2="0" y2="1"><stop offset="0" stop-color="#c8f000"/><stop offset="1" stop-color="#3c9a00"/></linearGradient>
<linearGradient id="gGry" x1="0" y1="0" x2="1" y2="1"><stop offset="0" stop-color="#f4f4f4"/><stop offset="1" stop-color="#b8b8b8"/></linearGradient>
<linearGradient id="gLav" x1="0" y1="0" x2="0" y2="1"><stop offset="0" stop-color="#d0d0fa"/><stop offset="1" stop-color="#8888d0"/></linearGradient>
<linearGradient id="gBody" x1="0" y1="0" x2="0" y2="1"><stop offset="0" stop-color="#ffffff"/><stop offset="1" stop-color="#c4c4cc"/></linearGradient>
<linearGradient id="gFold" x1="0" y1="0" x2="0" y2="1"><stop offset="0" stop-color="#ffe680"/><stop offset="1" stop-color="#f0a800"/></linearGradient>
<linearGradient id="gTan" x1="0" y1="0" x2="0" y2="1"><stop offset="0" stop-color="#f8dc90"/><stop offset="1" stop-color="#d8a040"/></linearGradient>
<radialGradient id="gGlobe" cx="0.35" cy="0.35" r="0.7"><stop offset="0" stop-color="#a0e0ff"/><stop offset="1" stop-color="#1060c0"/></radialGradient>
<linearGradient id="gScan" x1="0" y1="0" x2="0" y2="1"><stop offset="0" stop-color="#3a3a70"/><stop offset="1" stop-color="#9090c0"/></linearGradient>
</defs><path d="M10,11 V20 H14 M10,15 H14" fill="none" stroke="#5a5aa0" stroke-width="0.9"/>
<g fill="url(#gFold)" stroke="#c08a20" stroke-width="0.7"><path d="M5.5,7.5H8.5L9.5,8.5H12V12.5H5.5Z"/><path d="M14.5,10.5H17L18,11.5H21V15.5H14.5Z"/><path d="M14.5,17.5H17L18,18.5H21V22.5H14.5Z"/></g>
<rect x="6.5" y="32.5" width="21" height="19" fill="#fff" stroke="#3c3c7c"/>
<rect x="8" y="34" width="18" height="16" fill="url(#gOr)"/>
<circle cx="16.5" cy="38.5" r="3" fill="#ffe080"/>
<path d="M8,44 Q13,39 18,41 T26,40 V50 H8Z" fill="#e28c10"/>
<path d="M18,46 Q22,43 26,44 V50 H18Z" fill="#b06010"/>
<path d="M10,50.5 Q17,43 24,50.5 Q17,57 10,50.5Z" fill="#fff" stroke="#40407a" stroke-width="0.9"/>
<circle cx="17" cy="50.5" r="3.1" fill="#7878e0" stroke="#303078" stroke-width="0.6"/>
<circle cx="17" cy="50.5" r="1.2" fill="#101030"/>
<rect x="37.5" y="32.5" width="21" height="19" fill="#fff" stroke="#5858a0"/>
<rect x="37" y="51" width="22" height="1" fill="#101030"/>
<rect x="39" y="34" width="18" height="16" fill="#d4d4fc"/>
<rect x="41" y="36" width="14" height="12" fill="#babaf4"/>
<rect x="42.5" y="37.5" width="11" height="9" fill="#fff"/>
<rect x="44" y="39" width="8" height="6" fill="url(#gOr)"/>
<path d="M44,45 Q47,42 49,43 T52,42 V45Z" fill="#b86010"/>
<g fill="#2a2a90"><path d="M39,34H44L42.5,35.5L44.5,37.5L42.5,39.5L40.5,37.5L39,39Z"/><path d="M57,34H52L53.5,35.5L51.5,37.5L53.5,39.5L55.5,37.5L57,39Z"/><path d="M39,50H44L42.5,48.5L44.5,46.5L42.5,44.5L40.5,46.5L39,45Z"/><path d="M57,50H52L53.5,48.5L51.5,46.5L53.5,44.5L55.5,46.5L57,45Z"/></g>
<path d="M86.10,33.0 A9.3,9.3 0 0 0 86.10,51.599999999999994 V46.3 A4.0,4.0 0 0 1 86.10,38.3Z" fill="url(#gGry)" stroke="#4a4a8a" stroke-width="0.8"/><path d="M86.10,33.3 H96.00 L93.10,35.699999999999996 A9.3,9.3 0 0 1 86.10,51.599999999999994 V46.3 A4.0,4.0 0 0 0 88.90,39.4 L86.10,42.0Z" fill="url(#gGrn)" stroke="#2a8a00" stroke-width="0.8" stroke-linejoin="round"/>
<path d="M118.10,33.0 A9.3,9.3 0 0 1 118.10,51.599999999999994 V46.3 A4.0,4.0 0 0 0 118.10,38.3Z" fill="url(#gGry)" stroke="#4a4a8a" stroke-width="0.8"/><path d="M118.10,33.3 H108.20 L111.10,35.699999999999996 A9.3,9.3 0 0 0 118.10,51.599999999999994 V46.3 A4.0,4.0 0 0 1 115.30,39.4 L118.10,42.0Z" fill="url(#gGrn)" stroke="#2a8a00" stroke-width="0.8" stroke-linejoin="round"/>
<rect x="140.5" y="34.5" width="19" height="16" fill="#fff" stroke="#3c3c7c"/>
<rect x="142" y="36" width="16" height="13" fill="url(#gOr)"/>
<path d="M142,44 Q147,39 152,41 T158,40 V49 H142Z" fill="#d47a10"/>
<path d="M138,38 Q140,32 146,33 V31 L150,35 L146,39 V36.5 Q142,36 141,40Z" fill="url(#gGrn)" stroke="#2a7a00" stroke-width="0.7"/>
<path d="M162,47 Q160,53 154,52 V54 L150,50 L154,46 V48.5 Q158,49 159,45Z" fill="url(#gGrn)" stroke="#2a7a00" stroke-width="0.7"/>
<path d="M189.5,33.5H198.5L202.5,37.5V51.5H189.5Z" fill="#ececec" stroke="#50508a"/>
<path d="M198.5,33.5V37.5H202.5" fill="#fff" stroke="#50508a"/>
<circle cx="190.5" cy="46.5" r="6.3" fill="url(#gLav)" stroke="#40408a"/>
<rect x="189.5" y="45" width="2" height="5" fill="#fff"/><circle cx="190.5" cy="43" r="1.1" fill="#fff"/>
<path d="M215.5,37.5H221L223,39.5H233.5V51.5H215.5Z" fill="url(#gTan)" stroke="#a87020"/>
<path d="M225.5,31.5H233L237.5,36V46.5H225.5Z" fill="#f4f4f4" stroke="#50508a"/>
<path d="M233,31.5V36H237.5" fill="#fff" stroke="#50508a"/>
<path d="M235,39 L229,45 L231,47 H223 V39 L225,41 L231,35Z" fill="url(#gGrn)" stroke="#2a7a00" stroke-width="0.7"/>
<g fill="url(#gLav)" stroke="#40408a" stroke-width="0.9">
<rect x="264.5" y="34.5" width="5" height="6" rx="1"/><rect x="274.5" y="34.5" width="5" height="6" rx="1"/>
<rect x="262.5" y="40.5" width="8" height="10" rx="1.5"/><rect x="273.5" y="40.5" width="8" height="10" rx="1.5"/>
<rect x="270" y="41.5" width="4" height="4"/></g>
<rect x="264" y="42" width="2" height="6" fill="#eef" opacity="0.8"/><rect x="275" y="42" width="2" height="6" fill="#eef" opacity="0.8"/>
<path d="M296.5,32.5H305L308.5,36V42H296.5Z" fill="#f0f0f0" stroke="#50508a"/>
<rect x="292.5" y="40.5" width="21" height="10" rx="3" fill="url(#gBody)" stroke="#40408a"/>
<rect x="296" y="43" width="14" height="1.5" fill="#40408a"/>
<circle cx="310.5" cy="45" r="0.9" fill="#e03030"/>
<rect x="297.5" y="47.5" width="12" height="6" fill="#ffa000" stroke="#000"/>
<rect x="324.5" y="31.5" width="20" height="7" rx="1" fill="url(#gScan)" stroke="#30306a"/>
<rect x="325" y="38" width="19" height="6" fill="#5a6ae8"/>
<rect x="323.5" y="43.5" width="22" height="9" rx="2.5" fill="url(#gBody)" stroke="#40408a"/>
<circle cx="342" cy="49" r="0.9" fill="#e03030"/>
<rect x="353.5" y="32.5" width="18" height="15" fill="#fff" stroke="#3c3c7c"/>
<rect x="355" y="34" width="15" height="12" fill="#c0c0f0"/>
<rect x="358.5" y="36.5" width="18" height="15" fill="#fff" stroke="#3c3c7c"/>
<rect x="360" y="38" width="15" height="12" fill="url(#gOr)"/>
<path d="M362,46 Q367,41 371,43 T375,42 V50 H362Z" fill="#c06a10"/>
<path d="M355,45 Q355,40 361,40 V37 L367,43 L361,49 V45.5 Q357,45.5 357,50Z" fill="url(#gGrn)" stroke="#2a7a00" stroke-width="0.7"/>
<rect x="385.5" y="32.5" width="20" height="16" fill="#e4e4e4" stroke="#40408a"/>
<rect x="386" y="33" width="19" height="2.5" fill="#7070b0"/>
<rect x="387.5" y="42.5" width="17" height="11" rx="1.5" fill="url(#gLav)" stroke="#30307a"/>
<rect x="391" y="40.5" width="6" height="2.5" fill="#7070c0" stroke="#30307a" stroke-width="0.6"/>
<circle cx="396" cy="48" r="3.4" fill="#2040c0" stroke="#202060" stroke-width="0.7"/><circle cx="395" cy="47" r="1" fill="#a0c0ff"/>
<rect x="415.5" y="32" width="23" height="2.5" fill="#fff" stroke="#30306a" stroke-width="0.8"/>
<rect x="417.5" y="34.5" width="19" height="15" fill="#fff" stroke="#30306a"/>
<rect x="419" y="35.5" width="16" height="12.5" fill="url(#gOr)"/>
<path d="M419,44 Q424,38 429,41 T435,40 V48 H419Z" fill="#c06a10"/>
<path d="M424,49.5 L427,53.5 L430,49.5" fill="none" stroke="#303050"/>
<circle cx="454" cy="40.5" r="8" fill="url(#gGlobe)" stroke="#305090" stroke-width="0.7"/>
<path d="M449,36 Q452,33 455,35 L453,39 L456,42 L452,45 L449,41Z" fill="#60b030"/>
<rect x="458.5" y="42.5" width="11" height="8" fill="#c0c0f0" stroke="#3c3c7c"/>
<rect x="454.5" y="45.5" width="11" height="8" fill="#fff" stroke="#3c3c7c"/>
<rect x="456" y="47" width="8" height="5" fill="url(#gOr)"/>
<path d="M481.5,33.5H492L496.5,38V51.5H481.5Z" fill="#f6f6f6" stroke="#606090"/>
<path d="M492,33.5V38H496.5" fill="#fff" stroke="#606090"/>
<g fill="#4a4ac8"><rect x="484" y="39" width="3" height="3"/><rect x="489" y="39" width="3" height="3"/><rect x="484" y="44" width="3" height="3"/><rect x="489" y="44" width="3" height="3"/></g>
<path d="M537.55,40.35 L537.55,44.85 L534.61,45.28 L534.42,45.74 L536.20,48.12 L533.02,51.30 L530.64,49.52 L530.18,49.71 L529.75,52.65 L525.25,52.65 L524.82,49.71 L524.36,49.52 L521.98,51.30 L518.80,48.12 L520.58,45.74 L520.39,45.28 L517.45,44.85 L517.45,40.35 L520.39,39.92 L520.58,39.46 L518.80,37.08 L521.98,33.90 L524.36,35.68 L524.82,35.49 L525.25,32.55 L529.75,32.55 L530.18,35.49 L530.64,35.68 L533.02,33.90 L536.20,37.08 L534.42,39.46 L534.61,39.92Z" fill="url(#gLav)" stroke="#50508a" stroke-width="0.9"/><circle cx="527.5" cy="42.6" r="4" fill="#e0e0f4" stroke="#50508a"/><circle cx="527.5" cy="42.6" r="2" fill="#9a9ad0"/>
<circle cx="558.5" cy="42.6" r="10" fill="url(#gLav)" stroke="#50508a"/>
<rect x="557" y="41" width="3.2" height="7.5" fill="#fff"/><circle cx="558.6" cy="37.6" r="1.7" fill="#fff"/>
<path d="M312.5,73.3 L319,66.5 V70.5 H325 V76.5 H319 V80.3Z" fill="url(#gLav)" stroke="#4848a0" stroke-linejoin="round"/>
<path d="M348.5,73.3 L342,66.5 V70.5 H336 V76.5 H342 V80.3Z" fill="#e4e4e4" stroke="#a8a8a8" stroke-linejoin="round"/>
<path d="M357,72.5 L363,66 L369,72.5 H365.5 Q365,76 368,76.5 Q371,76 372,73.5 Q372,80 366,79.5 Q360.5,79 360.5,72.5Z" fill="url(#gGrn)" stroke="#2a7a00" stroke-width="0.8"/>
<path d="M388.5,69.5H394L396,71.5H403.5V80H388.5Z" fill="url(#gTan)" stroke="#a87020"/>
<path d="M388.5,73.5H403.5V80H388.5Z" fill="url(#gFold)" stroke="#a87020" opacity="0.9"/>
<path d="M400,64 L401,67 L404,66 L402,68.5 L405,70 L401.5,70.5 L402,73.5 L400,71 L398,73.5 L398.5,70.5 L395,70 L398,68.5 L396,66 L399,67Z" fill="#e81010"/>
<rect x="411.5" y="70.5" width="15" height="7" fill="#fff" stroke="#40408a"/>
<rect x="413" y="72" width="1" height="4" fill="#000"/>
<path d="M413,80 L414,76 L424,66 L427,69 L417,79Z" fill="#f8b020" stroke="#805010" stroke-width="0.7"/>
<path d="M424,66 L425.5,64.5 L428.5,67.5 L427,69Z" fill="#e05050"/>
<path d="M437,69 L440,66 L443,69 L446,66 L449,69 L446,72.5 L449,76 L446,79 L443,76 L440,79 L437,76 L440,72.5Z" fill="#e04848" stroke="#b02020" stroke-width="0.7"/>
<rect x="466.5" y="65.5" width="15" height="14" fill="#fff" stroke="#40408a"/>
<rect x="467" y="66" width="14" height="2" fill="#6a6ad8"/><rect x="469" y="70.0" width="2" height="2" fill="#4a4ad0"/><rect x="469" y="73.5" width="2" height="2" fill="#4a4ad0"/><rect x="469" y="77.0" width="2" height="2" fill="#4a4ad0"/><rect x="473" y="70.0" width="2" height="2" fill="#4a4ad0"/><rect x="473" y="73.5" width="2" height="2" fill="#4a4ad0"/><rect x="473" y="77.0" width="2" height="2" fill="#4a4ad0"/><rect x="477" y="70.0" width="2" height="2" fill="#4a4ad0"/><rect x="477" y="73.5" width="2" height="2" fill="#4a4ad0"/><rect x="477" y="77.0" width="2" height="2" fill="#4a4ad0"/>
<path d="M507,65.5 L512,70.5 H509.5 V76 H504.5 V70.5 H502Z" fill="url(#gGrn)" stroke="#2a7a00" stroke-width="0.7"/>
<path d="M514,79.5 L519,74.5 H516.5 V69 H511.5 V74.5 H509Z" fill="url(#gGrn)" stroke="#2a7a00" stroke-width="0.7"/>
<path d="M536.5,66.5 H549.5 L544.5,73 V79.5 L541.5,78 V73Z" fill="url(#gFold)" stroke="#c06010"/>
<ellipse cx="543" cy="67" rx="6.5" ry="1.5" fill="#fff0b0" stroke="#c06010" stroke-width="0.7"/>
<path d="M568,72 Q569,66 575,66 Q579,66 580.5,68.5 L582.5,66.5 V72.5 H576.5 L578.5,70.5 Q577.5,69 575,69 Q571.5,69 571,72Z" fill="url(#gLav)" stroke="#4848a0" stroke-width="0.8"/>
<path d="M582,73.5 Q581,79.5 575,79.5 Q571,79.5 569.5,77 L567.5,79 V73 H573.5 L571.5,75 Q572.5,76.5 575,76.5 Q578.5,76.5 579,73.5Z" fill="url(#gLav)" stroke="#4848a0" stroke-width="0.8"/>
<path d="M606.40,65.20 L608.52,70.29 L614.01,70.73 L609.82,74.31 L611.10,79.67 L606.40,76.80 L601.70,79.67 L602.98,74.31 L598.79,70.73 L604.28,70.29Z" fill="#ffd030" stroke="#c07010" stroke-width="0.8" stroke-linejoin="round"/>
<path d="M36.5,64.5H40.5L42,66H45.5V74.5H36.5Z" fill="url(#gFold)" stroke="#b07818" stroke-width="0.8"/>
<path d="M40.5,68.5H44.5L46,70H50.5V78.5H40.5Z" fill="url(#gFold)" stroke="#b07818" stroke-width="0.8"/>
<path d="M139.00,63.00 L140.47,66.48 L144.23,66.80 L141.38,69.27 L142.23,72.95 L139.00,71.00 L135.77,72.95 L136.62,69.27 L133.77,66.80 L137.53,66.48Z" fill="#ffd030" stroke="#c07010" stroke-width="0.7" stroke-linejoin="round"/><path d="M145.00,67.50 L146.47,70.98 L150.23,71.30 L147.38,73.77 L148.23,77.45 L145.00,75.50 L141.77,77.45 L142.62,73.77 L139.77,71.30 L143.53,70.98Z" fill="#ffd030" stroke="#c07010" stroke-width="0.7" stroke-linejoin="round"/>
<rect x="234.5" y="65.5" width="13" height="13" rx="1" fill="#6060c0" stroke="#30307a"/>
<rect x="233.5" y="63.5" width="12" height="13" rx="1" fill="url(#gLav)" stroke="#30307a"/>
<path d="M237,63.5 V72 L239.5,70 L242,72 V63.5Z" fill="#f0a000" stroke="#a05000" stroke-width="0.6"/>
<rect x="25.5" y="93.5" width="2.5" height="9" rx="1" fill="#c8c8c8" stroke="#707070" stroke-width="0.7"/><rect x="26" y="94.5" width="1.5" height="1.5" fill="#30e030"/>
<rect x="28.5" y="89.5" width="12" height="10" fill="#e8e8e8" stroke="#909090"/>
<rect x="29.5" y="90.5" width="10" height="8" fill="#1020c0"/><rect x="34" y="91" width="5" height="7" fill="#6080e0" opacity="0.7"/>
<path d="M32,100 H37 L38.5,102.5 H30.5Z" fill="#c0c0c0"/>
<rect x="44.5" y="114.5" width="15" height="7" rx="2" fill="#6aa0c0" stroke="#405060"/>
<rect x="45" y="117" width="14" height="4" fill="#2a5a7a"/><rect x="55" y="116.5" width="2" height="3" fill="#40e040"/>
<path d="M48,107 L52,106 L52,110 L48,111Z" fill="#f05020"/><path d="M52.5,105.8 L57,105 L57,109 L52.5,109.8Z" fill="#60b020"/>
<path d="M47.5,111.5 L52,110.5 L52,114.5 L47.5,115.5Z" fill="#2090f0"/><path d="M52.5,110.3 L57,109.5 L57,113.5 L52.5,114.3Z" fill="#f0c020"/>
<path d="M26.5,449.5 H39.5 L38,463.5 H28Z" fill="#d8eef8" stroke="#8098a8"/>
<ellipse cx="33" cy="449.5" rx="6.5" ry="1.5" fill="#f0f8ff" stroke="#8098a8" stroke-width="0.7"/>
<circle cx="33" cy="456" r="2.8" fill="#4080e0"/>
<rect x="25.5" y="467.5" width="15" height="11" rx="1.5" fill="#3a8ad8" stroke="#205090"/>
<circle cx="30" cy="472.5" r="2.5" fill="#fff"/><path d="M30,470 V472.5 H32.5" fill="#f0a000"/>
<rect x="34" y="471" width="5" height="1" fill="#fff"/><rect x="34" y="473" width="5" height="1" fill="#fff"/>
<ellipse cx="33" cy="480.5" rx="4" ry="2" fill="#d0d0d0" stroke="#909090" stroke-width="0.6"/>
<path d="M26.5,485.5 H33 L35,487.5 V499.5 H26.5Z" fill="url(#gTan)" stroke="#a07830"/>
<circle cx="36" cy="492" r="2.3" fill="#806040"/><path d="M32,499.5 Q32,494.5 36,494.5 Q40,494.5 40,499.5Z" fill="#40a070"/>
<path d="M25.5,504.5 H31 L33,506.5 H40.5 V517.5 H25.5Z" fill="url(#gTan)" stroke="#b08830"/>
<rect x="26" y="505" width="6" height="1" fill="#40c040"/>
<path d="M28,517 V512 Q33,509 38,512 V517 H35 V513.5 H31 V517Z" fill="#3a90d8"/>
<circle cx="30.5" cy="526.5" r="5.5" fill="url(#gGlobe)" stroke="#206040" stroke-width="0.6"/>
<path d="M27,524 Q29,521 32,522 L31,526 L28,527Z" fill="#40b040"/>
<rect x="33.5" y="526.5" width="8" height="7" fill="#0818c0" stroke="#404080"/>
<path d="M36,534 H39 L40,536.5 H35Z" fill="#5060a0"/>
<path d="M328.5,427.5 H335.5 L340.5,432.5 V441.5 H328.5Z" fill="#e0e0e0" stroke="#1a8ae8"/>
<path d="M335.5,427.5 V431 H340" fill="#fff" stroke="#1a8ae8" stroke-width="0.8"/>
<path d="M331,441 L332,437.5 L341.5,429 L343.5,431 L334,440Z" fill="#f8b020" stroke="#8a5a10" stroke-width="0.6"/>
<path d="M341.5,429 L342.8,427.8 L344.8,429.8 L343.5,431Z" fill="#e05050"/>
<path d="M328.5,446.5 H335.5 L340.5,451.5 V460.5 H328.5Z" fill="#e0e0e0" stroke="#1a8ae8"/>
<path d="M335.5,446.5 V450 H340" fill="#fff" stroke="#1a8ae8" stroke-width="0.8"/>
<path d="M331,460 L332,456.5 L341.5,448 L343.5,450 L334,459Z" fill="#f8b020" stroke="#8a5a10" stroke-width="0.6"/>
<path d="M341.5,448 L342.8,446.8 L344.8,448.8 L343.5,450Z" fill="#e05050"/>
<path d="M628.5,456.5 V472 L632.3,468.3 L635.2,474.5 L637.5,473.5 L634.7,467.4 L639.6,467.4Z" fill="#fff" stroke="#000" stroke-width="1" stroke-linejoin="miter"/></svg>
</body></html>
